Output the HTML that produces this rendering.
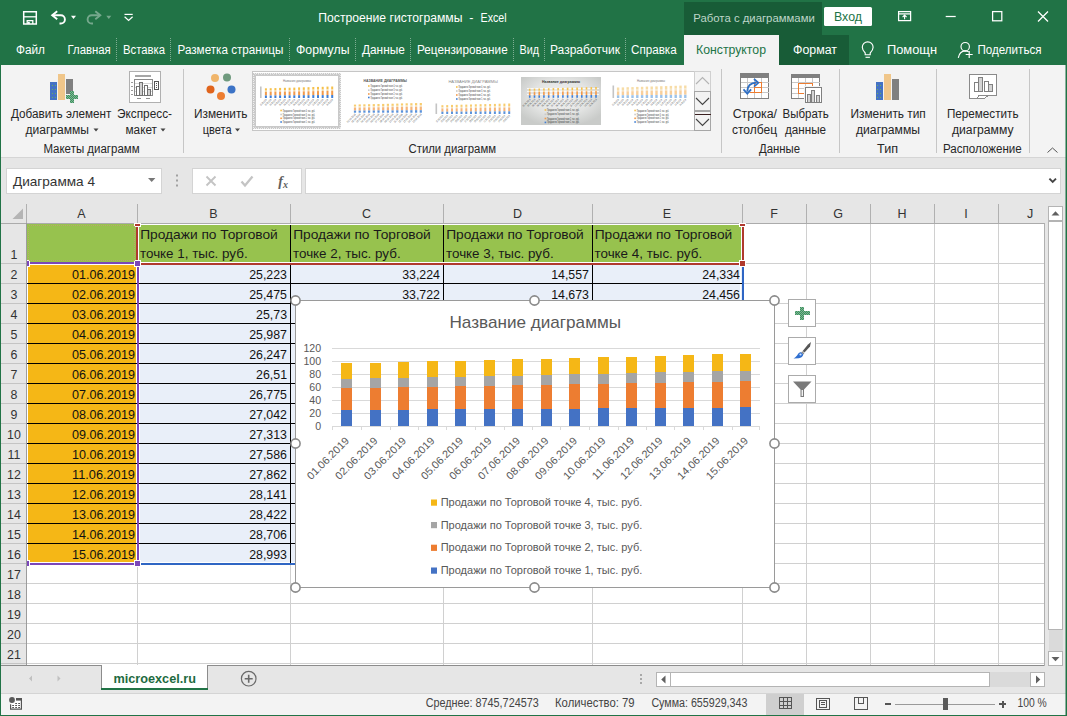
<!DOCTYPE html><html lang="ru"><head><meta charset="utf-8"><title>Построение гистограммы - Excel</title>
<style>html,body{margin:0;padding:0;background:#fff;overflow:hidden}svg{display:block;font-family:'Liberation Sans', sans-serif}</style></head><body>
<svg width="1067" height="716" viewBox="0 0 1067 716">
<g id="chrome" shape-rendering="crispEdges">
<rect x="0" y="0" width="1067" height="716" fill="#e6e6e6" />
<rect x="0" y="0" width="1067" height="65" fill="#217346" />
<rect x="684" y="2" width="138" height="33" fill="#185c37" />
<rect x="779" y="35" width="70" height="30" fill="#185c37" />
<rect x="684" y="35" width="95" height="30" fill="#f3f3f3" />
<rect x="1" y="65" width="1065" height="92" fill="#f3f3f3" />
<line x1="1" y1="157.5" x2="1066" y2="157.5" stroke="#d5d5d5" stroke-width="1" />
</g>
<g id="titlebar">
<g fill="none" stroke="#fff" stroke-width="1.500"><path d="M23.700 11.700h12.600v12.400H23.700z"/><path d="M24 16.800h12" stroke-width="1.300"/><path d="M27.200 24v-3.400h5.600V24" stroke-width="1.300"/></g><rect x="27.800" y="21.800" width="2" height="2.200" fill="#fff"/>
<g fill="none" stroke="#fff" stroke-width="1.900" stroke-linejoin="miter"><path d="M57.200 11.300l-5 4 5 4"/><path d="M52.500 15.300h8.300a4.100 4.100 0 0 1 0 8.200h-1.300"/></g>
<path d="M71 15.800h5l-2.500 3.200z" fill="#fff"/>
<g opacity=".38"><g fill="none" stroke="#fff" stroke-width="1.900"><path d="M95.300 11.300l5 4-5 4"/><path d="M100 15.300h-8.300a4.100 4.100 0 0 0 0 8.200h1.300"/></g><path d="M106.300 15.800h5l-2.500 3.200z" fill="#fff"/></g>
<path d="M124.500 14.400h8.200" stroke="#fff" stroke-width="1.200"/><path d="M124.600 16.800l4 3.700 4-3.700" fill="none" stroke="#fff" stroke-width="1.200"/>
<text x="318.3" y="22" font-size="12.5" fill="#fff" textLength="144.2" lengthAdjust="spacingAndGlyphs" >Построение гистограммы</text>
<text x="469.3" y="22" font-size="12.5" fill="#fff" >-</text>
<text x="480.6" y="22" font-size="12.5" fill="#fff" textLength="26" lengthAdjust="spacingAndGlyphs" >Excel</text>
<text x="693.3" y="22" font-size="11.6" fill="#bfd6c9" textLength="121.5" lengthAdjust="spacingAndGlyphs" >Работа с диаграммами</text>
<rect x="824" y="7" width="48" height="19" fill="#fff" rx="1.500"/>
<text x="834" y="21" font-size="12.5" fill="#217346" textLength="28" lengthAdjust="spacingAndGlyphs" >Вход</text>
<g fill="none" stroke="#fff" stroke-width="1.250"><rect x="898.600" y="11.600" width="12" height="9"/><path d="M898.600 13.900h12"/><path d="M945.700 16.500h10"/><rect x="992.600" y="11.600" width="9.200" height="9.200"/><path d="M904.600 19.300v-4m-2 1.800l2-2 2 2" stroke-width="1.100"/><path d="M1038 11.500l10 10m0-10l-10 10"/></g>
</g>
<g id="tabs">
<text x="16" y="54" font-size="12.5" fill="#fff" textLength="29" lengthAdjust="spacingAndGlyphs" >Файл</text>
<text x="67.5" y="54" font-size="12.5" fill="#fff" textLength="43.2" lengthAdjust="spacingAndGlyphs" >Главная</text>
<text x="123" y="54" font-size="12.5" fill="#fff" textLength="42" lengthAdjust="spacingAndGlyphs" >Вставка</text>
<text x="177.5" y="54" font-size="12.5" fill="#fff" textLength="105.9" lengthAdjust="spacingAndGlyphs" >Разметка страницы</text>
<text x="296" y="54" font-size="12.5" fill="#fff" textLength="53.5" lengthAdjust="spacingAndGlyphs" >Формулы</text>
<text x="362" y="54" font-size="12.5" fill="#fff" textLength="42.8" lengthAdjust="spacingAndGlyphs" >Данные</text>
<text x="417" y="54" font-size="12.5" fill="#fff" textLength="90.7" lengthAdjust="spacingAndGlyphs" >Рецензирование</text>
<text x="519.5" y="54" font-size="12.5" fill="#fff" textLength="19.5" lengthAdjust="spacingAndGlyphs" >Вид</text>
<text x="550" y="54" font-size="12.5" fill="#fff" textLength="70" lengthAdjust="spacingAndGlyphs" >Разработчик</text>
<text x="631" y="54" font-size="12.5" fill="#fff" textLength="45.7" lengthAdjust="spacingAndGlyphs" >Справка</text>
<line x1="116.5" y1="38" x2="116.5" y2="61" stroke="#7fae93" stroke-width="1" shape-rendering="crispEdges" stroke-dasharray="1 1"/>
<line x1="170.5" y1="38" x2="170.5" y2="61" stroke="#7fae93" stroke-width="1" shape-rendering="crispEdges" stroke-dasharray="1 1"/>
<line x1="289.5" y1="38" x2="289.5" y2="61" stroke="#7fae93" stroke-width="1" shape-rendering="crispEdges" stroke-dasharray="1 1"/>
<line x1="355.5" y1="38" x2="355.5" y2="61" stroke="#7fae93" stroke-width="1" shape-rendering="crispEdges" stroke-dasharray="1 1"/>
<line x1="410.5" y1="38" x2="410.5" y2="61" stroke="#7fae93" stroke-width="1" shape-rendering="crispEdges" stroke-dasharray="1 1"/>
<line x1="513.5" y1="38" x2="513.5" y2="61" stroke="#7fae93" stroke-width="1" shape-rendering="crispEdges" stroke-dasharray="1 1"/>
<line x1="544.5" y1="38" x2="544.5" y2="61" stroke="#7fae93" stroke-width="1" shape-rendering="crispEdges" stroke-dasharray="1 1"/>
<line x1="625.5" y1="38" x2="625.5" y2="61" stroke="#7fae93" stroke-width="1" shape-rendering="crispEdges" stroke-dasharray="1 1"/>
<text x="696" y="54" font-size="12.5" fill="#217346" textLength="70" lengthAdjust="spacingAndGlyphs" >Конструктор</text>
<text x="793" y="54" font-size="12.5" fill="#fff" textLength="44" lengthAdjust="spacingAndGlyphs" >Формат</text>
<g fill="none" stroke="#fff" stroke-width="1.150"><path d="M865.200 53c-1.800-1.800-2.900-3.500-2.900-5.800a5.400 5.400 0 0 1 10.800 0c0 2.300-1.100 4-2.900 5.800v1.700h-5z"/><path d="M865.500 57.300h4.400"/></g>
<text x="887" y="54" font-size="12.5" fill="#fff" textLength="50" lengthAdjust="spacingAndGlyphs" >Помощн</text>
<g fill="none" stroke="#fff" stroke-width="1.150"><circle cx="965.200" cy="46.700" r="4.200"/><path d="M958.300 57.800c.8-4.300 3.300-6.800 6.900-6.900 1.300 0 2.500.3 3.500.9"/><path d="M965.700 54.500h7m-3.500-3.500v7"/></g>
<text x="977.5" y="54" font-size="12.5" fill="#fff" textLength="64" lengthAdjust="spacingAndGlyphs" >Поделиться</text>
</g>
<g id="ribbon">
<line x1="183.5" y1="69" x2="183.5" y2="153" stroke="#c6c6c6" stroke-width="1" shape-rendering="crispEdges"/>
<line x1="721.5" y1="69" x2="721.5" y2="153" stroke="#c6c6c6" stroke-width="1" shape-rendering="crispEdges"/>
<line x1="839.5" y1="69" x2="839.5" y2="153" stroke="#c6c6c6" stroke-width="1" shape-rendering="crispEdges"/>
<line x1="936.5" y1="69" x2="936.5" y2="153" stroke="#c6c6c6" stroke-width="1" shape-rendering="crispEdges"/>
<line x1="1029.5" y1="69" x2="1029.5" y2="153" stroke="#c6c6c6" stroke-width="1" shape-rendering="crispEdges"/>
<defs><pattern id="gd" width="3" height="4" patternUnits="userSpaceOnUse"><rect width="3" height="4" fill="#4472c4"/><rect x="1" y="1" width="1" height="1" fill="#6fae5a"/></pattern><pattern id="hx" width="2" height="2" patternUnits="userSpaceOnUse"><rect width="2" height="2" fill="#3f8f5f"/><rect width="1" height="1" fill="#7db894"/><rect x="1" y="1" width="1" height="1" fill="#7db894"/></pattern></defs>
<g shape-rendering="crispEdges"><rect x="50" y="82" width="7" height="18" fill="url(#gd)"/><rect x="58" y="74" width="7" height="26" fill="#f0c68a"/><rect x="66" y="79" width="7" height="15" fill="#808080"/><path d="M69.500 90.500h5v4h4v5h-4v4h-5v-4h-4v-5h4z" fill="#f3f3f3"/><path d="M70 91h4v4h4v4h-4v4h-4v-4h-4v-4h4z" fill="url(#hx)"/></g>
<text x="11" y="117.8" font-size="12" fill="#262626" textLength="100.4" lengthAdjust="spacingAndGlyphs" >Добавить элемент</text>
<text x="25.5" y="134.2" font-size="12" fill="#262626" textLength="63.5" lengthAdjust="spacingAndGlyphs" >диаграммы</text>
<path d="M93.500 128.500l2.500 3 2.500-3z" fill="#444"/>
<g shape-rendering="crispEdges"><rect x="129.500" y="71.500" width="31" height="31" fill="#fff" stroke="#b0b0b0"/><rect x="135" y="75" width="16" height="2" fill="#a6a6a6"/><rect x="134.500" y="79.500" width="18" height="16" fill="#fff" stroke="#8a8a8a"/><path d="M135 83.500h17M135 87.500h17M135 91.500h17" stroke="#d8d8d8" fill="none"/><path d="M131 82.500h2M131 86.500h2M131 90.500h2M131 94.500h2" stroke="#9a9a9a" fill="none"/><rect x="136.500" y="86.500" width="3" height="9" fill="#fff" stroke="#707070"/><rect x="139.500" y="82.500" width="3" height="13" fill="#d0d0d0" stroke="#707070"/><rect x="144.500" y="85.500" width="3" height="10" fill="#fff" stroke="#707070"/><rect x="147.500" y="89.500" width="3" height="6" fill="#d0d0d0" stroke="#707070"/><rect x="154.500" y="81.500" width="4" height="8" fill="#fff" stroke="#555"/><rect x="156" y="83" width="1" height="1" fill="#555"/><rect x="156" y="85" width="1" height="1" fill="#555"/><rect x="156" y="87" width="1" height="1" fill="#555"/><rect x="137" y="98" width="4" height="1" fill="#909090"/><rect x="146" y="98" width="4" height="1" fill="#909090"/></g>
<text x="117" y="117.8" font-size="12" fill="#262626" textLength="55" lengthAdjust="spacingAndGlyphs" >Экспресс-</text>
<text x="125.5" y="134.2" font-size="12" fill="#262626" textLength="31.5" lengthAdjust="spacingAndGlyphs" >макет</text>
<path d="M160.500 128.500l2.500 3 2.500-3z" fill="#444"/>
<text x="43.4" y="153.2" font-size="12" fill="#262626" textLength="96.2" lengthAdjust="spacingAndGlyphs" >Макеты диаграмм</text>
<circle cx="215" cy="78" r="4" fill="#f0b56a"/>
<circle cx="227" cy="77.5" r="4" fill="#6f9a7e"/>
<circle cx="210.5" cy="89.5" r="4" fill="#e0641c"/>
<circle cx="231.5" cy="89.5" r="4" fill="#3c73c6"/>
<circle cx="221" cy="96" r="4" fill="#ed7d31"/>
<text x="194" y="117.8" font-size="12" fill="#262626" textLength="53.5" lengthAdjust="spacingAndGlyphs" >Изменить</text>
<text x="202.7" y="134.2" font-size="12" fill="#262626" textLength="28.9" lengthAdjust="spacingAndGlyphs" >цвета</text>
<path d="M235 128.500l2.500 3 2.500-3z" fill="#444"/>
<g shape-rendering="crispEdges">
<rect x="252.5" y="71.5" width="442" height="59" fill="#fff" stroke="#c6c6c6"/>
<rect x="694.5" y="71.5" width="16" height="20" fill="#f3f3f3" stroke="#d0d0d0"/>
<rect x="694.5" y="91.5" width="16" height="19" fill="#f3f3f3" stroke="#a6a6a6"/>
<rect x="694.5" y="111.5" width="16" height="19" fill="#f3f3f3" stroke="#a6a6a6"/>
</g>
<g fill="none" stroke="#444" stroke-width="1.100"><path d="M696 84l6.500-6.500 6.500 6.500" stroke="#b4b4b4"/><path d="M696 98l6.500 6.500 6.500-6.500"/><path d="M696 119l6.500 6.500 6.500-6.500"/><path d="M695 114.500h15.500" shape-rendering="crispEdges" stroke="#3a2020"/></g>
<rect x="253" y="73" width="88" height="56" fill="#c9c9c9" shape-rendering="crispEdges"/>
<rect x="253.500" y="73.500" width="87" height="55" fill="none" stroke="#efefef" stroke-dasharray="1 1" shape-rendering="crispEdges"/>
<rect x="254.500" y="74.500" width="85" height="53" fill="none" stroke="#dcdcdc" stroke-dasharray="1 2" shape-rendering="crispEdges"/>
<rect x="256" y="76" width="82" height="50" fill="#fff" shape-rendering="crispEdges"/>
<rect x="264.9" y="88.3" width="2" height="2.3" fill="#f6c04a" />
<rect x="264.9" y="90.7" width="2" height="1.4" fill="#f3d9a8" />
<rect x="264.9" y="92.0" width="2" height="3.5" fill="#f29a4a" />
<rect x="264.9" y="95.5" width="2" height="2.5" fill="#3f7fd6" />
<text transform="translate(266.9,100) rotate(-45)" font-size="2.600" fill="#444" text-anchor="end" textLength="8.5" lengthAdjust="spacingAndGlyphs">01.06.2019</text>
<rect x="269.7" y="88.2" width="2" height="2.3" fill="#f6c04a" />
<rect x="269.7" y="90.6" width="2" height="1.4" fill="#f3d9a8" />
<rect x="269.7" y="91.9" width="2" height="3.5" fill="#f29a4a" />
<rect x="269.7" y="95.5" width="2" height="2.5" fill="#3f7fd6" />
<text transform="translate(271.7,100) rotate(-45)" font-size="2.600" fill="#444" text-anchor="end" textLength="8.5" lengthAdjust="spacingAndGlyphs">02.06.2019</text>
<rect x="274.4" y="88.1" width="2" height="2.4" fill="#f6c04a" />
<rect x="274.4" y="90.5" width="2" height="1.4" fill="#f3d9a8" />
<rect x="274.4" y="91.8" width="2" height="3.6" fill="#f29a4a" />
<rect x="274.4" y="95.4" width="2" height="2.6" fill="#3f7fd6" />
<text transform="translate(276.4,100) rotate(-45)" font-size="2.600" fill="#444" text-anchor="end" textLength="8.5" lengthAdjust="spacingAndGlyphs">03.06.2019</text>
<rect x="279.1" y="87.9" width="2" height="2.4" fill="#f6c04a" />
<rect x="279.1" y="90.4" width="2" height="1.4" fill="#f3d9a8" />
<rect x="279.1" y="91.8" width="2" height="3.6" fill="#f29a4a" />
<rect x="279.1" y="95.4" width="2" height="2.6" fill="#3f7fd6" />
<text transform="translate(281.1,100) rotate(-45)" font-size="2.600" fill="#444" text-anchor="end" textLength="8.5" lengthAdjust="spacingAndGlyphs">04.06.2019</text>
<rect x="283.9" y="87.8" width="2" height="2.4" fill="#f6c04a" />
<rect x="283.9" y="90.3" width="2" height="1.4" fill="#f3d9a8" />
<rect x="283.9" y="91.7" width="2" height="3.7" fill="#f29a4a" />
<rect x="283.9" y="95.4" width="2" height="2.6" fill="#3f7fd6" />
<text transform="translate(285.9,100) rotate(-45)" font-size="2.600" fill="#444" text-anchor="end" textLength="8.5" lengthAdjust="spacingAndGlyphs">05.06.2019</text>
<rect x="288.6" y="87.7" width="2" height="2.5" fill="#f6c04a" />
<rect x="288.6" y="90.2" width="2" height="1.4" fill="#f3d9a8" />
<rect x="288.6" y="91.6" width="2" height="3.7" fill="#f29a4a" />
<rect x="288.6" y="95.3" width="2" height="2.7" fill="#3f7fd6" />
<text transform="translate(290.6,100) rotate(-45)" font-size="2.600" fill="#444" text-anchor="end" textLength="8.5" lengthAdjust="spacingAndGlyphs">06.06.2019</text>
<rect x="293.3" y="87.6" width="2" height="2.5" fill="#f6c04a" />
<rect x="293.3" y="90.1" width="2" height="1.5" fill="#f3d9a8" />
<rect x="293.3" y="91.5" width="2" height="3.8" fill="#f29a4a" />
<rect x="293.3" y="95.3" width="2" height="2.7" fill="#3f7fd6" />
<text transform="translate(295.3,100) rotate(-45)" font-size="2.600" fill="#444" text-anchor="end" textLength="8.5" lengthAdjust="spacingAndGlyphs">07.06.2019</text>
<rect x="298.1" y="87.4" width="2" height="2.5" fill="#f6c04a" />
<rect x="298.1" y="90.0" width="2" height="1.5" fill="#f3d9a8" />
<rect x="298.1" y="91.4" width="2" height="3.8" fill="#f29a4a" />
<rect x="298.1" y="95.2" width="2" height="2.8" fill="#3f7fd6" />
<text transform="translate(300.1,100) rotate(-45)" font-size="2.600" fill="#444" text-anchor="end" textLength="8.5" lengthAdjust="spacingAndGlyphs">08.06.2019</text>
<rect x="302.8" y="87.3" width="2" height="2.6" fill="#f6c04a" />
<rect x="302.8" y="89.9" width="2" height="1.5" fill="#f3d9a8" />
<rect x="302.8" y="91.4" width="2" height="3.9" fill="#f29a4a" />
<rect x="302.8" y="95.2" width="2" height="2.8" fill="#3f7fd6" />
<text transform="translate(304.8,100) rotate(-45)" font-size="2.600" fill="#444" text-anchor="end" textLength="8.5" lengthAdjust="spacingAndGlyphs">09.06.2019</text>
<rect x="307.5" y="87.2" width="2" height="2.6" fill="#f6c04a" />
<rect x="307.5" y="89.8" width="2" height="1.5" fill="#f3d9a8" />
<rect x="307.5" y="91.3" width="2" height="3.9" fill="#f29a4a" />
<rect x="307.5" y="95.2" width="2" height="2.8" fill="#3f7fd6" />
<text transform="translate(309.5,100) rotate(-45)" font-size="2.600" fill="#444" text-anchor="end" textLength="8.5" lengthAdjust="spacingAndGlyphs">10.06.2019</text>
<rect x="312.3" y="87.0" width="2" height="2.6" fill="#f6c04a" />
<rect x="312.3" y="89.7" width="2" height="1.5" fill="#f3d9a8" />
<rect x="312.3" y="91.2" width="2" height="4.0" fill="#f29a4a" />
<rect x="312.3" y="95.1" width="2" height="2.9" fill="#3f7fd6" />
<text transform="translate(314.3,100) rotate(-45)" font-size="2.600" fill="#444" text-anchor="end" textLength="8.5" lengthAdjust="spacingAndGlyphs">11.06.2019</text>
<rect x="317.0" y="86.9" width="2" height="2.7" fill="#f6c04a" />
<rect x="317.0" y="89.6" width="2" height="1.6" fill="#f3d9a8" />
<rect x="317.0" y="91.1" width="2" height="4.0" fill="#f29a4a" />
<rect x="317.0" y="95.1" width="2" height="2.9" fill="#3f7fd6" />
<text transform="translate(319.0,100) rotate(-45)" font-size="2.600" fill="#444" text-anchor="end" textLength="8.5" lengthAdjust="spacingAndGlyphs">12.06.2019</text>
<rect x="321.7" y="86.8" width="2" height="2.7" fill="#f6c04a" />
<rect x="321.7" y="89.5" width="2" height="1.6" fill="#f3d9a8" />
<rect x="321.7" y="91.0" width="2" height="4.0" fill="#f29a4a" />
<rect x="321.7" y="95.1" width="2" height="2.9" fill="#3f7fd6" />
<text transform="translate(323.7,100) rotate(-45)" font-size="2.600" fill="#444" text-anchor="end" textLength="8.5" lengthAdjust="spacingAndGlyphs">13.06.2019</text>
<rect x="326.5" y="86.6" width="2" height="2.7" fill="#f6c04a" />
<rect x="326.5" y="89.4" width="2" height="1.6" fill="#f3d9a8" />
<rect x="326.5" y="91.0" width="2" height="4.1" fill="#f29a4a" />
<rect x="326.5" y="95.0" width="2" height="3.0" fill="#3f7fd6" />
<text transform="translate(328.5,100) rotate(-45)" font-size="2.600" fill="#444" text-anchor="end" textLength="8.5" lengthAdjust="spacingAndGlyphs">14.06.2019</text>
<rect x="331.2" y="86.5" width="2" height="2.8" fill="#f6c04a" />
<rect x="331.2" y="89.3" width="2" height="1.6" fill="#f3d9a8" />
<rect x="331.2" y="90.9" width="2" height="4.1" fill="#f29a4a" />
<rect x="331.2" y="95.0" width="2" height="3.0" fill="#3f7fd6" />
<text transform="translate(333.2,100) rotate(-45)" font-size="2.600" fill="#444" text-anchor="end" textLength="8.5" lengthAdjust="spacingAndGlyphs">15.06.2019</text>
<rect x="260" y="86.5" width="1.6" height="11.5" fill="#c4c4c4" />
<text x="283" y="82.3" font-size="3.2" fill="#777" textLength="28" lengthAdjust="spacingAndGlyphs">Название диаграммы</text>
<rect x="280.3" y="109.7" width="1.6" height="1.6" fill="#f6c04a" />
<text x="282.8" y="111.5" font-size="2.800" fill="#333" textLength="32.2" lengthAdjust="spacingAndGlyphs">Продажи по Торговой точке 4, тыс. руб.</text>
<rect x="280.3" y="113.7" width="1.6" height="1.6" fill="#c9c9c9" />
<text x="282.8" y="115.5" font-size="2.800" fill="#333" textLength="32.2" lengthAdjust="spacingAndGlyphs">Продажи по Торговой точке 3, тыс. руб.</text>
<rect x="280.3" y="117.5" width="1.6" height="1.6" fill="#f29a4a" />
<text x="282.8" y="119.3" font-size="2.800" fill="#333" textLength="32.2" lengthAdjust="spacingAndGlyphs">Продажи по Торговой точке 2, тыс. руб.</text>
<rect x="280.3" y="121.2" width="1.6" height="1.6" fill="#3f7fd6" />
<text x="282.8" y="123" font-size="2.800" fill="#333" textLength="32.2" lengthAdjust="spacingAndGlyphs">Продажи по Торговой точке 1, тыс. руб.</text>
<rect x="353.9" y="104.6" width="2.2" height="2.0" fill="#f8cd6e" />
<rect x="353.9" y="106.5" width="2.2" height="1.1" fill="#f6e3bd" />
<rect x="353.9" y="107.6" width="2.2" height="2.9" fill="#f6b47a" />
<rect x="353.9" y="110.6" width="2.2" height="2.1" fill="#5b93dc" />
<text transform="translate(356.0,114.7) rotate(-45)" font-size="2.600" fill="#444" text-anchor="end" textLength="11.7" lengthAdjust="spacingAndGlyphs">01.06.2019</text>
<rect x="358.6" y="104.4" width="2.2" height="2.0" fill="#f8cd6e" />
<rect x="358.6" y="106.4" width="2.2" height="1.2" fill="#f6e3bd" />
<rect x="358.6" y="107.6" width="2.2" height="3.0" fill="#f6b47a" />
<rect x="358.6" y="110.6" width="2.2" height="2.1" fill="#5b93dc" />
<text transform="translate(360.7,114.7) rotate(-45)" font-size="2.600" fill="#444" text-anchor="end" textLength="11.7" lengthAdjust="spacingAndGlyphs">02.06.2019</text>
<rect x="363.3" y="104.3" width="2.2" height="2.0" fill="#f8cd6e" />
<rect x="363.3" y="106.3" width="2.2" height="1.2" fill="#f6e3bd" />
<rect x="363.3" y="107.5" width="2.2" height="3.0" fill="#f6b47a" />
<rect x="363.3" y="110.5" width="2.2" height="2.2" fill="#5b93dc" />
<text transform="translate(365.4,114.7) rotate(-45)" font-size="2.600" fill="#444" text-anchor="end" textLength="11.7" lengthAdjust="spacingAndGlyphs">03.06.2019</text>
<rect x="368.0" y="104.2" width="2.2" height="2.0" fill="#f8cd6e" />
<rect x="368.0" y="106.3" width="2.2" height="1.2" fill="#f6e3bd" />
<rect x="368.0" y="107.4" width="2.2" height="3.1" fill="#f6b47a" />
<rect x="368.0" y="110.5" width="2.2" height="2.2" fill="#5b93dc" />
<text transform="translate(370.1,114.7) rotate(-45)" font-size="2.600" fill="#444" text-anchor="end" textLength="11.7" lengthAdjust="spacingAndGlyphs">04.06.2019</text>
<rect x="372.7" y="104.1" width="2.2" height="2.1" fill="#f8cd6e" />
<rect x="372.7" y="106.2" width="2.2" height="1.2" fill="#f6e3bd" />
<rect x="372.7" y="107.4" width="2.2" height="3.1" fill="#f6b47a" />
<rect x="372.7" y="110.5" width="2.2" height="2.2" fill="#5b93dc" />
<text transform="translate(374.8,114.7) rotate(-45)" font-size="2.600" fill="#444" text-anchor="end" textLength="11.7" lengthAdjust="spacingAndGlyphs">05.06.2019</text>
<rect x="377.4" y="104.0" width="2.2" height="2.1" fill="#f8cd6e" />
<rect x="377.4" y="106.1" width="2.2" height="1.2" fill="#f6e3bd" />
<rect x="377.4" y="107.3" width="2.2" height="3.1" fill="#f6b47a" />
<rect x="377.4" y="110.4" width="2.2" height="2.3" fill="#5b93dc" />
<text transform="translate(379.5,114.7) rotate(-45)" font-size="2.600" fill="#444" text-anchor="end" textLength="11.7" lengthAdjust="spacingAndGlyphs">06.06.2019</text>
<rect x="382.1" y="103.9" width="2.2" height="2.1" fill="#f8cd6e" />
<rect x="382.1" y="106.0" width="2.2" height="1.2" fill="#f6e3bd" />
<rect x="382.1" y="107.2" width="2.2" height="3.2" fill="#f6b47a" />
<rect x="382.1" y="110.4" width="2.2" height="2.3" fill="#5b93dc" />
<text transform="translate(384.2,114.7) rotate(-45)" font-size="2.600" fill="#444" text-anchor="end" textLength="11.7" lengthAdjust="spacingAndGlyphs">07.06.2019</text>
<rect x="386.8" y="103.8" width="2.2" height="2.1" fill="#f8cd6e" />
<rect x="386.8" y="105.9" width="2.2" height="1.2" fill="#f6e3bd" />
<rect x="386.8" y="107.2" width="2.2" height="3.2" fill="#f6b47a" />
<rect x="386.8" y="110.4" width="2.2" height="2.3" fill="#5b93dc" />
<text transform="translate(388.9,114.7) rotate(-45)" font-size="2.600" fill="#444" text-anchor="end" textLength="11.7" lengthAdjust="spacingAndGlyphs">08.06.2019</text>
<rect x="391.5" y="103.7" width="2.2" height="2.2" fill="#f8cd6e" />
<rect x="391.5" y="105.8" width="2.2" height="1.3" fill="#f6e3bd" />
<rect x="391.5" y="107.1" width="2.2" height="3.3" fill="#f6b47a" />
<rect x="391.5" y="110.4" width="2.2" height="2.3" fill="#5b93dc" />
<text transform="translate(393.6,114.7) rotate(-45)" font-size="2.600" fill="#444" text-anchor="end" textLength="11.7" lengthAdjust="spacingAndGlyphs">09.06.2019</text>
<rect x="396.2" y="103.6" width="2.2" height="2.2" fill="#f8cd6e" />
<rect x="396.2" y="105.7" width="2.2" height="1.3" fill="#f6e3bd" />
<rect x="396.2" y="107.0" width="2.2" height="3.3" fill="#f6b47a" />
<rect x="396.2" y="110.3" width="2.2" height="2.4" fill="#5b93dc" />
<text transform="translate(398.3,114.7) rotate(-45)" font-size="2.600" fill="#444" text-anchor="end" textLength="11.7" lengthAdjust="spacingAndGlyphs">10.06.2019</text>
<rect x="400.9" y="103.4" width="2.2" height="2.2" fill="#f8cd6e" />
<rect x="400.9" y="105.7" width="2.2" height="1.3" fill="#f6e3bd" />
<rect x="400.9" y="107.0" width="2.2" height="3.3" fill="#f6b47a" />
<rect x="400.9" y="110.3" width="2.2" height="2.4" fill="#5b93dc" />
<text transform="translate(403.0,114.7) rotate(-45)" font-size="2.600" fill="#444" text-anchor="end" textLength="11.7" lengthAdjust="spacingAndGlyphs">11.06.2019</text>
<rect x="405.6" y="103.3" width="2.2" height="2.2" fill="#f8cd6e" />
<rect x="405.6" y="105.6" width="2.2" height="1.3" fill="#f6e3bd" />
<rect x="405.6" y="106.9" width="2.2" height="3.4" fill="#f6b47a" />
<rect x="405.6" y="110.3" width="2.2" height="2.4" fill="#5b93dc" />
<text transform="translate(407.7,114.7) rotate(-45)" font-size="2.600" fill="#444" text-anchor="end" textLength="11.7" lengthAdjust="spacingAndGlyphs">12.06.2019</text>
<rect x="410.3" y="103.2" width="2.2" height="2.3" fill="#f8cd6e" />
<rect x="410.3" y="105.5" width="2.2" height="1.3" fill="#f6e3bd" />
<rect x="410.3" y="106.8" width="2.2" height="3.4" fill="#f6b47a" />
<rect x="410.3" y="110.2" width="2.2" height="2.5" fill="#5b93dc" />
<text transform="translate(412.4,114.7) rotate(-45)" font-size="2.600" fill="#444" text-anchor="end" textLength="11.7" lengthAdjust="spacingAndGlyphs">13.06.2019</text>
<rect x="415.0" y="103.1" width="2.2" height="2.3" fill="#f8cd6e" />
<rect x="415.0" y="105.4" width="2.2" height="1.3" fill="#f6e3bd" />
<rect x="415.0" y="106.8" width="2.2" height="3.5" fill="#f6b47a" />
<rect x="415.0" y="110.2" width="2.2" height="2.5" fill="#5b93dc" />
<text transform="translate(417.1,114.7) rotate(-45)" font-size="2.600" fill="#444" text-anchor="end" textLength="11.7" lengthAdjust="spacingAndGlyphs">14.06.2019</text>
<rect x="419.7" y="103.0" width="2.2" height="2.3" fill="#f8cd6e" />
<rect x="419.7" y="105.3" width="2.2" height="1.4" fill="#f6e3bd" />
<rect x="419.7" y="106.7" width="2.2" height="3.5" fill="#f6b47a" />
<rect x="419.7" y="110.2" width="2.2" height="2.5" fill="#5b93dc" />
<text transform="translate(421.8,114.7) rotate(-45)" font-size="2.600" fill="#444" text-anchor="end" textLength="11.7" lengthAdjust="spacingAndGlyphs">15.06.2019</text>
<text x="363.6" y="81.8" font-size="3.6" fill="#555" textLength="43.4" lengthAdjust="spacingAndGlyphs" font-weight="bold">НАЗВАНИЕ ДИАГРАММЫ</text>
<rect x="368" y="85.2" width="1.6" height="1.6" fill="#f6c04a" />
<text x="370.5" y="87" font-size="2.800" fill="#333" textLength="32.1" lengthAdjust="spacingAndGlyphs">Продажи по Торговой точке 4, тыс. руб.</text>
<rect x="368" y="89.4" width="1.6" height="1.6" fill="#c9c9c9" />
<text x="370.5" y="91.2" font-size="2.800" fill="#333" textLength="32.1" lengthAdjust="spacingAndGlyphs">Продажи по Торговой точке 3, тыс. руб.</text>
<rect x="368" y="93.2" width="1.6" height="1.6" fill="#f29a4a" />
<text x="370.5" y="95" font-size="2.800" fill="#333" textLength="32.1" lengthAdjust="spacingAndGlyphs">Продажи по Торговой точке 2, тыс. руб.</text>
<rect x="368" y="96.7" width="1.6" height="1.6" fill="#3f7fd6" />
<text x="370.5" y="98.5" font-size="2.800" fill="#333" textLength="32.1" lengthAdjust="spacingAndGlyphs">Продажи по Торговой точке 1, тыс. руб.</text>
<rect x="441.4" y="105.2" width="2" height="2.1" fill="#f8cd6e" />
<rect x="441.4" y="107.3" width="2" height="1.2" fill="#f6e3bd" />
<rect x="441.4" y="108.5" width="2" height="3.2" fill="#f6b47a" />
<rect x="441.4" y="111.7" width="2" height="2.3" fill="#5b93dc" />
<text transform="translate(443.4,116) rotate(-45)" font-size="2.600" fill="#444" text-anchor="end" textLength="9.2" lengthAdjust="spacingAndGlyphs">01.06.2019</text>
<rect x="446.2" y="105.1" width="2" height="2.1" fill="#f8cd6e" />
<rect x="446.2" y="107.2" width="2" height="1.3" fill="#f6e3bd" />
<rect x="446.2" y="108.5" width="2" height="3.2" fill="#f6b47a" />
<rect x="446.2" y="111.7" width="2" height="2.3" fill="#5b93dc" />
<text transform="translate(448.2,116) rotate(-45)" font-size="2.600" fill="#444" text-anchor="end" textLength="9.2" lengthAdjust="spacingAndGlyphs">02.06.2019</text>
<rect x="451.0" y="104.9" width="2" height="2.2" fill="#f8cd6e" />
<rect x="451.0" y="107.1" width="2" height="1.3" fill="#f6e3bd" />
<rect x="451.0" y="108.4" width="2" height="3.3" fill="#f6b47a" />
<rect x="451.0" y="111.6" width="2" height="2.4" fill="#5b93dc" />
<text transform="translate(453.0,116) rotate(-45)" font-size="2.600" fill="#444" text-anchor="end" textLength="9.2" lengthAdjust="spacingAndGlyphs">03.06.2019</text>
<rect x="455.7" y="104.8" width="2" height="2.2" fill="#f8cd6e" />
<rect x="455.7" y="107.0" width="2" height="1.3" fill="#f6e3bd" />
<rect x="455.7" y="108.3" width="2" height="3.3" fill="#f6b47a" />
<rect x="455.7" y="111.6" width="2" height="2.4" fill="#5b93dc" />
<text transform="translate(457.7,116) rotate(-45)" font-size="2.600" fill="#444" text-anchor="end" textLength="9.2" lengthAdjust="spacingAndGlyphs">04.06.2019</text>
<rect x="460.5" y="104.7" width="2" height="2.2" fill="#f8cd6e" />
<rect x="460.5" y="106.9" width="2" height="1.3" fill="#f6e3bd" />
<rect x="460.5" y="108.2" width="2" height="3.3" fill="#f6b47a" />
<rect x="460.5" y="111.6" width="2" height="2.4" fill="#5b93dc" />
<text transform="translate(462.5,116) rotate(-45)" font-size="2.600" fill="#444" text-anchor="end" textLength="9.2" lengthAdjust="spacingAndGlyphs">05.06.2019</text>
<rect x="465.3" y="104.6" width="2" height="2.3" fill="#f8cd6e" />
<rect x="465.3" y="106.8" width="2" height="1.3" fill="#f6e3bd" />
<rect x="465.3" y="108.2" width="2" height="3.4" fill="#f6b47a" />
<rect x="465.3" y="111.6" width="2" height="2.4" fill="#5b93dc" />
<text transform="translate(467.3,116) rotate(-45)" font-size="2.600" fill="#444" text-anchor="end" textLength="9.2" lengthAdjust="spacingAndGlyphs">06.06.2019</text>
<rect x="470.0" y="104.5" width="2" height="2.3" fill="#f8cd6e" />
<rect x="470.0" y="106.7" width="2" height="1.3" fill="#f6e3bd" />
<rect x="470.0" y="108.1" width="2" height="3.4" fill="#f6b47a" />
<rect x="470.0" y="111.5" width="2" height="2.5" fill="#5b93dc" />
<text transform="translate(472.0,116) rotate(-45)" font-size="2.600" fill="#444" text-anchor="end" textLength="9.2" lengthAdjust="spacingAndGlyphs">07.06.2019</text>
<rect x="474.8" y="104.3" width="2" height="2.3" fill="#f8cd6e" />
<rect x="474.8" y="106.7" width="2" height="1.4" fill="#f6e3bd" />
<rect x="474.8" y="108.0" width="2" height="3.5" fill="#f6b47a" />
<rect x="474.8" y="111.5" width="2" height="2.5" fill="#5b93dc" />
<text transform="translate(476.8,116) rotate(-45)" font-size="2.600" fill="#444" text-anchor="end" textLength="9.2" lengthAdjust="spacingAndGlyphs">08.06.2019</text>
<rect x="479.6" y="104.2" width="2" height="2.3" fill="#f8cd6e" />
<rect x="479.6" y="106.6" width="2" height="1.4" fill="#f6e3bd" />
<rect x="479.6" y="107.9" width="2" height="3.5" fill="#f6b47a" />
<rect x="479.6" y="111.5" width="2" height="2.5" fill="#5b93dc" />
<text transform="translate(481.6,116) rotate(-45)" font-size="2.600" fill="#444" text-anchor="end" textLength="9.2" lengthAdjust="spacingAndGlyphs">09.06.2019</text>
<rect x="484.3" y="104.1" width="2" height="2.4" fill="#f8cd6e" />
<rect x="484.3" y="106.5" width="2" height="1.4" fill="#f6e3bd" />
<rect x="484.3" y="107.9" width="2" height="3.6" fill="#f6b47a" />
<rect x="484.3" y="111.4" width="2" height="2.6" fill="#5b93dc" />
<text transform="translate(486.3,116) rotate(-45)" font-size="2.600" fill="#444" text-anchor="end" textLength="9.2" lengthAdjust="spacingAndGlyphs">10.06.2019</text>
<rect x="489.1" y="104.0" width="2" height="2.4" fill="#f8cd6e" />
<rect x="489.1" y="106.4" width="2" height="1.4" fill="#f6e3bd" />
<rect x="489.1" y="107.8" width="2" height="3.6" fill="#f6b47a" />
<rect x="489.1" y="111.4" width="2" height="2.6" fill="#5b93dc" />
<text transform="translate(491.1,116) rotate(-45)" font-size="2.600" fill="#444" text-anchor="end" textLength="9.2" lengthAdjust="spacingAndGlyphs">11.06.2019</text>
<rect x="493.9" y="103.9" width="2" height="2.4" fill="#f8cd6e" />
<rect x="493.9" y="106.3" width="2" height="1.4" fill="#f6e3bd" />
<rect x="493.9" y="107.7" width="2" height="3.7" fill="#f6b47a" />
<rect x="493.9" y="111.4" width="2" height="2.6" fill="#5b93dc" />
<text transform="translate(495.9,116) rotate(-45)" font-size="2.600" fill="#444" text-anchor="end" textLength="9.2" lengthAdjust="spacingAndGlyphs">12.06.2019</text>
<rect x="498.6" y="103.7" width="2" height="2.5" fill="#f8cd6e" />
<rect x="498.6" y="106.2" width="2" height="1.4" fill="#f6e3bd" />
<rect x="498.6" y="107.6" width="2" height="3.7" fill="#f6b47a" />
<rect x="498.6" y="111.3" width="2" height="2.7" fill="#5b93dc" />
<text transform="translate(500.6,116) rotate(-45)" font-size="2.600" fill="#444" text-anchor="end" textLength="9.2" lengthAdjust="spacingAndGlyphs">13.06.2019</text>
<rect x="503.4" y="103.6" width="2" height="2.5" fill="#f8cd6e" />
<rect x="503.4" y="106.1" width="2" height="1.5" fill="#f6e3bd" />
<rect x="503.4" y="107.6" width="2" height="3.7" fill="#f6b47a" />
<rect x="503.4" y="111.3" width="2" height="2.7" fill="#5b93dc" />
<text transform="translate(505.4,116) rotate(-45)" font-size="2.600" fill="#444" text-anchor="end" textLength="9.2" lengthAdjust="spacingAndGlyphs">14.06.2019</text>
<rect x="508.2" y="103.5" width="2" height="2.5" fill="#f8cd6e" />
<rect x="508.2" y="106.0" width="2" height="1.5" fill="#f6e3bd" />
<rect x="508.2" y="107.5" width="2" height="3.8" fill="#f6b47a" />
<rect x="508.2" y="111.3" width="2" height="2.7" fill="#5b93dc" />
<text transform="translate(510.2,116) rotate(-45)" font-size="2.600" fill="#444" text-anchor="end" textLength="9.2" lengthAdjust="spacingAndGlyphs">15.06.2019</text>
<rect x="435.5" y="103.5" width="1.6" height="10.5" fill="#c4c4c4" />
<text x="448.4" y="82.6" font-size="3.6" fill="#8a8a8a" textLength="49.4" lengthAdjust="spacingAndGlyphs">НАЗВАНИЕ ДИАГРАММЫ</text>
<rect x="456" y="86.2" width="1.6" height="1.6" fill="#f6c04a" />
<text x="458.5" y="88" font-size="2.800" fill="#333" textLength="32.0" lengthAdjust="spacingAndGlyphs">Продажи по Торговой точке 4, тыс. руб.</text>
<rect x="456" y="90.2" width="1.6" height="1.6" fill="#c9c9c9" />
<text x="458.5" y="92" font-size="2.800" fill="#333" textLength="32.0" lengthAdjust="spacingAndGlyphs">Продажи по Торговой точке 3, тыс. руб.</text>
<rect x="456" y="94.2" width="1.6" height="1.6" fill="#f29a4a" />
<text x="458.5" y="96" font-size="2.800" fill="#333" textLength="32.0" lengthAdjust="spacingAndGlyphs">Продажи по Торговой точке 2, тыс. руб.</text>
<rect x="456" y="98.2" width="1.6" height="1.6" fill="#3f7fd6" />
<text x="458.5" y="100" font-size="2.800" fill="#333" textLength="32.0" lengthAdjust="spacingAndGlyphs">Продажи по Торговой точке 1, тыс. руб.</text>
<rect x="521" y="77" width="80" height="48" fill="#c9cbc9" />
<defs><radialGradient id="rg" cx=".5" cy=".42" r=".62"><stop offset="0" stop-color="#f4f4f4"/><stop offset=".6" stop-color="#e2e3e2"/><stop offset="1" stop-color="#c9cbc9"/></radialGradient></defs>
<rect x="521" y="77" width="80" height="48" fill="url(#rg)" />
<line x1="527" y1="88.5" x2="599" y2="88.5" stroke="#fff" stroke-width="0.8" />
<line x1="527" y1="91.5" x2="599" y2="91.5" stroke="#fff" stroke-width="0.8" />
<line x1="527" y1="94.5" x2="599" y2="94.5" stroke="#fff" stroke-width="0.8" />
<rect x="528.9" y="88.7" width="1.6" height="2.2" fill="#f6c04a" />
<rect x="528.9" y="90.9" width="1.6" height="1.3" fill="#f3d9a8" />
<rect x="528.9" y="92.2" width="1.6" height="3.3" fill="#f29a4a" />
<rect x="528.9" y="95.4" width="1.6" height="2.4" fill="#3f7fd6" />
<text transform="translate(530.7,99.8) rotate(-45)" font-size="2.600" fill="#444" text-anchor="end" textLength="10.2" lengthAdjust="spacingAndGlyphs">01.06.2019</text>
<rect x="533.7" y="88.6" width="1.6" height="2.2" fill="#f6c04a" />
<rect x="533.7" y="90.8" width="1.6" height="1.3" fill="#f3d9a8" />
<rect x="533.7" y="92.1" width="1.6" height="3.3" fill="#f29a4a" />
<rect x="533.7" y="95.4" width="1.6" height="2.4" fill="#3f7fd6" />
<text transform="translate(535.5,99.8) rotate(-45)" font-size="2.600" fill="#444" text-anchor="end" textLength="10.2" lengthAdjust="spacingAndGlyphs">02.06.2019</text>
<rect x="538.4" y="88.5" width="1.6" height="2.2" fill="#f6c04a" />
<rect x="538.4" y="90.7" width="1.6" height="1.3" fill="#f3d9a8" />
<rect x="538.4" y="92.0" width="1.6" height="3.4" fill="#f29a4a" />
<rect x="538.4" y="95.4" width="1.6" height="2.4" fill="#3f7fd6" />
<text transform="translate(540.2,99.8) rotate(-45)" font-size="2.600" fill="#444" text-anchor="end" textLength="10.2" lengthAdjust="spacingAndGlyphs">03.06.2019</text>
<rect x="543.1" y="88.4" width="1.6" height="2.3" fill="#f6c04a" />
<rect x="543.1" y="90.6" width="1.6" height="1.3" fill="#f3d9a8" />
<rect x="543.1" y="91.9" width="1.6" height="3.4" fill="#f29a4a" />
<rect x="543.1" y="95.3" width="1.6" height="2.5" fill="#3f7fd6" />
<text transform="translate(544.9,99.8) rotate(-45)" font-size="2.600" fill="#444" text-anchor="end" textLength="10.2" lengthAdjust="spacingAndGlyphs">04.06.2019</text>
<rect x="547.9" y="88.2" width="1.6" height="2.3" fill="#f6c04a" />
<rect x="547.9" y="90.5" width="1.6" height="1.3" fill="#f3d9a8" />
<rect x="547.9" y="91.9" width="1.6" height="3.4" fill="#f29a4a" />
<rect x="547.9" y="95.3" width="1.6" height="2.5" fill="#3f7fd6" />
<text transform="translate(549.7,99.8) rotate(-45)" font-size="2.600" fill="#444" text-anchor="end" textLength="10.2" lengthAdjust="spacingAndGlyphs">05.06.2019</text>
<rect x="552.6" y="88.1" width="1.6" height="2.3" fill="#f6c04a" />
<rect x="552.6" y="90.4" width="1.6" height="1.4" fill="#f3d9a8" />
<rect x="552.6" y="91.8" width="1.6" height="3.5" fill="#f29a4a" />
<rect x="552.6" y="95.3" width="1.6" height="2.5" fill="#3f7fd6" />
<text transform="translate(554.4,99.8) rotate(-45)" font-size="2.600" fill="#444" text-anchor="end" textLength="10.2" lengthAdjust="spacingAndGlyphs">06.06.2019</text>
<rect x="557.3" y="88.0" width="1.6" height="2.4" fill="#f6c04a" />
<rect x="557.3" y="90.3" width="1.6" height="1.4" fill="#f3d9a8" />
<rect x="557.3" y="91.7" width="1.6" height="3.5" fill="#f29a4a" />
<rect x="557.3" y="95.2" width="1.6" height="2.6" fill="#3f7fd6" />
<text transform="translate(559.1,99.8) rotate(-45)" font-size="2.600" fill="#444" text-anchor="end" textLength="10.2" lengthAdjust="spacingAndGlyphs">07.06.2019</text>
<rect x="562.1" y="87.9" width="1.6" height="2.4" fill="#f6c04a" />
<rect x="562.1" y="90.2" width="1.6" height="1.4" fill="#f3d9a8" />
<rect x="562.1" y="91.6" width="1.6" height="3.6" fill="#f29a4a" />
<rect x="562.1" y="95.2" width="1.6" height="2.6" fill="#3f7fd6" />
<text transform="translate(563.9,99.8) rotate(-45)" font-size="2.600" fill="#444" text-anchor="end" textLength="10.2" lengthAdjust="spacingAndGlyphs">08.06.2019</text>
<rect x="566.8" y="87.7" width="1.6" height="2.4" fill="#f6c04a" />
<rect x="566.8" y="90.2" width="1.6" height="1.4" fill="#f3d9a8" />
<rect x="566.8" y="91.6" width="1.6" height="3.6" fill="#f29a4a" />
<rect x="566.8" y="95.2" width="1.6" height="2.6" fill="#3f7fd6" />
<text transform="translate(568.6,99.8) rotate(-45)" font-size="2.600" fill="#444" text-anchor="end" textLength="10.2" lengthAdjust="spacingAndGlyphs">09.06.2019</text>
<rect x="571.5" y="87.6" width="1.6" height="2.4" fill="#f6c04a" />
<rect x="571.5" y="90.1" width="1.6" height="1.4" fill="#f3d9a8" />
<rect x="571.5" y="91.5" width="1.6" height="3.7" fill="#f29a4a" />
<rect x="571.5" y="95.2" width="1.6" height="2.6" fill="#3f7fd6" />
<text transform="translate(573.3,99.8) rotate(-45)" font-size="2.600" fill="#444" text-anchor="end" textLength="10.2" lengthAdjust="spacingAndGlyphs">10.06.2019</text>
<rect x="576.3" y="87.5" width="1.6" height="2.5" fill="#f6c04a" />
<rect x="576.3" y="90.0" width="1.6" height="1.4" fill="#f3d9a8" />
<rect x="576.3" y="91.4" width="1.6" height="3.7" fill="#f29a4a" />
<rect x="576.3" y="95.1" width="1.6" height="2.7" fill="#3f7fd6" />
<text transform="translate(578.1,99.8) rotate(-45)" font-size="2.600" fill="#444" text-anchor="end" textLength="10.2" lengthAdjust="spacingAndGlyphs">11.06.2019</text>
<rect x="581.0" y="87.4" width="1.6" height="2.5" fill="#f6c04a" />
<rect x="581.0" y="89.9" width="1.6" height="1.5" fill="#f3d9a8" />
<rect x="581.0" y="91.3" width="1.6" height="3.8" fill="#f29a4a" />
<rect x="581.0" y="95.1" width="1.6" height="2.7" fill="#3f7fd6" />
<text transform="translate(582.8,99.8) rotate(-45)" font-size="2.600" fill="#444" text-anchor="end" textLength="10.2" lengthAdjust="spacingAndGlyphs">12.06.2019</text>
<rect x="585.7" y="87.2" width="1.6" height="2.5" fill="#f6c04a" />
<rect x="585.7" y="89.8" width="1.6" height="1.5" fill="#f3d9a8" />
<rect x="585.7" y="91.3" width="1.6" height="3.8" fill="#f29a4a" />
<rect x="585.7" y="95.1" width="1.6" height="2.7" fill="#3f7fd6" />
<text transform="translate(587.5,99.8) rotate(-45)" font-size="2.600" fill="#444" text-anchor="end" textLength="10.2" lengthAdjust="spacingAndGlyphs">13.06.2019</text>
<rect x="590.5" y="87.1" width="1.6" height="2.6" fill="#f6c04a" />
<rect x="590.5" y="89.7" width="1.6" height="1.5" fill="#f3d9a8" />
<rect x="590.5" y="91.2" width="1.6" height="3.8" fill="#f29a4a" />
<rect x="590.5" y="95.0" width="1.6" height="2.8" fill="#3f7fd6" />
<text transform="translate(592.3,99.8) rotate(-45)" font-size="2.600" fill="#444" text-anchor="end" textLength="10.2" lengthAdjust="spacingAndGlyphs">14.06.2019</text>
<rect x="595.2" y="87.0" width="1.6" height="2.6" fill="#f6c04a" />
<rect x="595.2" y="89.6" width="1.6" height="1.5" fill="#f3d9a8" />
<rect x="595.2" y="91.1" width="1.6" height="3.9" fill="#f29a4a" />
<rect x="595.2" y="95.0" width="1.6" height="2.8" fill="#3f7fd6" />
<text transform="translate(597.0,99.8) rotate(-45)" font-size="2.600" fill="#444" text-anchor="end" textLength="10.2" lengthAdjust="spacingAndGlyphs">15.06.2019</text>
<text x="542" y="82.8" font-size="3.6" fill="#333" textLength="38" lengthAdjust="spacingAndGlyphs" font-weight="bold">Название диаграммы</text>
<rect x="544.6" y="109.2" width="1.6" height="1.6" fill="#f6c04a" />
<text x="547.1" y="111" font-size="2.800" fill="#333" textLength="32.2" lengthAdjust="spacingAndGlyphs">Продажи по Торговой точке 4, тыс. руб.</text>
<rect x="544.6" y="113.5" width="1.6" height="1.6" fill="#c9c9c9" />
<text x="547.1" y="115.3" font-size="2.800" fill="#333" textLength="32.2" lengthAdjust="spacingAndGlyphs">Продажи по Торговой точке 3, тыс. руб.</text>
<rect x="544.6" y="117.7" width="1.6" height="1.6" fill="#f29a4a" />
<text x="547.1" y="119.5" font-size="2.800" fill="#333" textLength="32.2" lengthAdjust="spacingAndGlyphs">Продажи по Торговой точке 2, тыс. руб.</text>
<rect x="544.6" y="121.6" width="1.6" height="1.6" fill="#3f7fd6" />
<text x="547.1" y="123.4" font-size="2.800" fill="#333" textLength="32.2" lengthAdjust="spacingAndGlyphs">Продажи по Торговой точке 1, тыс. руб.</text>
<rect x="616.9" y="87.5" width="2.4" height="2.5" fill="#f7dca6" />
<rect x="616.9" y="90.0" width="2.4" height="1.5" fill="#f5e6c8" />
<rect x="616.9" y="91.5" width="2.4" height="3.8" fill="#f8cf9c" />
<rect x="616.9" y="95.3" width="2.4" height="2.7" fill="#9dc3ea" />
<text transform="translate(619.1,100) rotate(-45)" font-size="2.600" fill="#444" text-anchor="end" textLength="8.5" lengthAdjust="spacingAndGlyphs">01.06.2019</text>
<rect x="621.7" y="87.4" width="2.4" height="2.6" fill="#f7dca6" />
<rect x="621.7" y="89.9" width="2.4" height="1.5" fill="#f5e6c8" />
<rect x="621.7" y="91.4" width="2.4" height="3.8" fill="#f8cf9c" />
<rect x="621.7" y="95.2" width="2.4" height="2.8" fill="#9dc3ea" />
<text transform="translate(623.9,100) rotate(-45)" font-size="2.600" fill="#444" text-anchor="end" textLength="8.5" lengthAdjust="spacingAndGlyphs">02.06.2019</text>
<rect x="626.5" y="87.2" width="2.4" height="2.6" fill="#f7dca6" />
<rect x="626.5" y="89.8" width="2.4" height="1.5" fill="#f5e6c8" />
<rect x="626.5" y="91.3" width="2.4" height="3.9" fill="#f8cf9c" />
<rect x="626.5" y="95.2" width="2.4" height="2.8" fill="#9dc3ea" />
<text transform="translate(628.7,100) rotate(-45)" font-size="2.600" fill="#444" text-anchor="end" textLength="8.5" lengthAdjust="spacingAndGlyphs">03.06.2019</text>
<rect x="631.3" y="87.1" width="2.4" height="2.6" fill="#f7dca6" />
<rect x="631.3" y="89.7" width="2.4" height="1.5" fill="#f5e6c8" />
<rect x="631.3" y="91.2" width="2.4" height="3.9" fill="#f8cf9c" />
<rect x="631.3" y="95.2" width="2.4" height="2.8" fill="#9dc3ea" />
<text transform="translate(633.5,100) rotate(-45)" font-size="2.600" fill="#444" text-anchor="end" textLength="8.5" lengthAdjust="spacingAndGlyphs">04.06.2019</text>
<rect x="636.1" y="86.9" width="2.4" height="2.7" fill="#f7dca6" />
<rect x="636.1" y="89.6" width="2.4" height="1.6" fill="#f5e6c8" />
<rect x="636.1" y="91.1" width="2.4" height="4.0" fill="#f8cf9c" />
<rect x="636.1" y="95.1" width="2.4" height="2.9" fill="#9dc3ea" />
<text transform="translate(638.3,100) rotate(-45)" font-size="2.600" fill="#444" text-anchor="end" textLength="8.5" lengthAdjust="spacingAndGlyphs">05.06.2019</text>
<rect x="640.9" y="86.8" width="2.4" height="2.7" fill="#f7dca6" />
<rect x="640.9" y="89.5" width="2.4" height="1.6" fill="#f5e6c8" />
<rect x="640.9" y="91.0" width="2.4" height="4.0" fill="#f8cf9c" />
<rect x="640.9" y="95.1" width="2.4" height="2.9" fill="#9dc3ea" />
<text transform="translate(643.1,100) rotate(-45)" font-size="2.600" fill="#444" text-anchor="end" textLength="8.5" lengthAdjust="spacingAndGlyphs">06.06.2019</text>
<rect x="645.7" y="86.6" width="2.4" height="2.7" fill="#f7dca6" />
<rect x="645.7" y="89.4" width="2.4" height="1.6" fill="#f5e6c8" />
<rect x="645.7" y="91.0" width="2.4" height="4.1" fill="#f8cf9c" />
<rect x="645.7" y="95.0" width="2.4" height="3.0" fill="#9dc3ea" />
<text transform="translate(647.9,100) rotate(-45)" font-size="2.600" fill="#444" text-anchor="end" textLength="8.5" lengthAdjust="spacingAndGlyphs">07.06.2019</text>
<rect x="650.5" y="86.5" width="2.4" height="2.8" fill="#f7dca6" />
<rect x="650.5" y="89.3" width="2.4" height="1.6" fill="#f5e6c8" />
<rect x="650.5" y="90.9" width="2.4" height="4.1" fill="#f8cf9c" />
<rect x="650.5" y="95.0" width="2.4" height="3.0" fill="#9dc3ea" />
<text transform="translate(652.7,100) rotate(-45)" font-size="2.600" fill="#444" text-anchor="end" textLength="8.5" lengthAdjust="spacingAndGlyphs">08.06.2019</text>
<rect x="655.3" y="86.4" width="2.4" height="2.8" fill="#f7dca6" />
<rect x="655.3" y="89.2" width="2.4" height="1.6" fill="#f5e6c8" />
<rect x="655.3" y="90.8" width="2.4" height="4.2" fill="#f8cf9c" />
<rect x="655.3" y="95.0" width="2.4" height="3.0" fill="#9dc3ea" />
<text transform="translate(657.5,100) rotate(-45)" font-size="2.600" fill="#444" text-anchor="end" textLength="8.5" lengthAdjust="spacingAndGlyphs">09.06.2019</text>
<rect x="660.1" y="86.2" width="2.4" height="2.8" fill="#f7dca6" />
<rect x="660.1" y="89.0" width="2.4" height="1.6" fill="#f5e6c8" />
<rect x="660.1" y="90.7" width="2.4" height="4.2" fill="#f8cf9c" />
<rect x="660.1" y="94.9" width="2.4" height="3.1" fill="#9dc3ea" />
<text transform="translate(662.3,100) rotate(-45)" font-size="2.600" fill="#444" text-anchor="end" textLength="8.5" lengthAdjust="spacingAndGlyphs">10.06.2019</text>
<rect x="664.9" y="86.1" width="2.4" height="2.9" fill="#f7dca6" />
<rect x="664.9" y="88.9" width="2.4" height="1.7" fill="#f5e6c8" />
<rect x="664.9" y="90.6" width="2.4" height="4.3" fill="#f8cf9c" />
<rect x="664.9" y="94.9" width="2.4" height="3.1" fill="#9dc3ea" />
<text transform="translate(667.1,100) rotate(-45)" font-size="2.600" fill="#444" text-anchor="end" textLength="8.5" lengthAdjust="spacingAndGlyphs">11.06.2019</text>
<rect x="669.7" y="85.9" width="2.4" height="2.9" fill="#f7dca6" />
<rect x="669.7" y="88.8" width="2.4" height="1.7" fill="#f5e6c8" />
<rect x="669.7" y="90.5" width="2.4" height="4.3" fill="#f8cf9c" />
<rect x="669.7" y="94.9" width="2.4" height="3.1" fill="#9dc3ea" />
<text transform="translate(671.9,100) rotate(-45)" font-size="2.600" fill="#444" text-anchor="end" textLength="8.5" lengthAdjust="spacingAndGlyphs">12.06.2019</text>
<rect x="674.5" y="85.8" width="2.4" height="2.9" fill="#f7dca6" />
<rect x="674.5" y="88.7" width="2.4" height="1.7" fill="#f5e6c8" />
<rect x="674.5" y="90.4" width="2.4" height="4.4" fill="#f8cf9c" />
<rect x="674.5" y="94.8" width="2.4" height="3.2" fill="#9dc3ea" />
<text transform="translate(676.7,100) rotate(-45)" font-size="2.600" fill="#444" text-anchor="end" textLength="8.5" lengthAdjust="spacingAndGlyphs">13.06.2019</text>
<rect x="679.3" y="85.6" width="2.4" height="3.0" fill="#f7dca6" />
<rect x="679.3" y="88.6" width="2.4" height="1.7" fill="#f5e6c8" />
<rect x="679.3" y="90.3" width="2.4" height="4.4" fill="#f8cf9c" />
<rect x="679.3" y="94.8" width="2.4" height="3.2" fill="#9dc3ea" />
<text transform="translate(681.5,100) rotate(-45)" font-size="2.600" fill="#444" text-anchor="end" textLength="8.5" lengthAdjust="spacingAndGlyphs">14.06.2019</text>
<rect x="684.1" y="85.5" width="2.4" height="3.0" fill="#f7dca6" />
<rect x="684.1" y="88.5" width="2.4" height="1.8" fill="#f5e6c8" />
<rect x="684.1" y="90.2" width="2.4" height="4.5" fill="#f8cf9c" />
<rect x="684.1" y="94.8" width="2.4" height="3.2" fill="#9dc3ea" />
<text transform="translate(686.3,100) rotate(-45)" font-size="2.600" fill="#444" text-anchor="end" textLength="8.5" lengthAdjust="spacingAndGlyphs">15.06.2019</text>
<rect x="612.5" y="85.5" width="1.6" height="12.5" fill="#c4c4c4" />
<text x="637" y="82.3" font-size="3.2" fill="#777" textLength="28" lengthAdjust="spacingAndGlyphs">Название диаграммы</text>
<rect x="634.3" y="109.7" width="1.6" height="1.6" fill="#f6c04a" />
<text x="636.8" y="111.5" font-size="2.800" fill="#333" textLength="32.2" lengthAdjust="spacingAndGlyphs">Продажи по Торговой точке 4, тыс. руб.</text>
<rect x="634.3" y="113.7" width="1.6" height="1.6" fill="#c9c9c9" />
<text x="636.8" y="115.5" font-size="2.800" fill="#333" textLength="32.2" lengthAdjust="spacingAndGlyphs">Продажи по Торговой точке 3, тыс. руб.</text>
<rect x="634.3" y="117.5" width="1.6" height="1.6" fill="#f29a4a" />
<text x="636.8" y="119.3" font-size="2.800" fill="#333" textLength="32.2" lengthAdjust="spacingAndGlyphs">Продажи по Торговой точке 2, тыс. руб.</text>
<rect x="634.3" y="121.2" width="1.6" height="1.6" fill="#3f7fd6" />
<text x="636.8" y="123" font-size="2.800" fill="#333" textLength="32.2" lengthAdjust="spacingAndGlyphs">Продажи по Торговой точке 1, тыс. руб.</text>
<text x="408.5" y="153.2" font-size="12" fill="#262626" textLength="87.5" lengthAdjust="spacingAndGlyphs" >Стили диаграмм</text>
<g shape-rendering="crispEdges"><rect x="740.500" y="73.500" width="28" height="25" fill="#fff" stroke="#808080"/><rect x="740" y="73" width="29" height="4.500" fill="#808080"/><path d="M747.500 78v20M754.500 78v20M761.500 78v20M741 82.500h28M741 87.500h28M741 92.500h28" stroke="#c8c8c8" fill="none"/><path d="M754.500 82.500h7v10h-11.500M754.500 82.500v10M754.500 87.500h7" fill="none" stroke="#ed7d31"/></g>
<path d="M747.300 91.500c0-5.500 3.500-8.700 8.700-8.700" fill="none" stroke="#2f6fc4" stroke-width="2"/><path d="M754 79l4.300 3.800-4.300 3.800" fill="none" stroke="#2f6fc4" stroke-width="1.800"/><path d="M743.500 89.300l3.800 4.300 3.800-4.300" fill="none" stroke="#2f6fc4" stroke-width="1.800"/>
<text x="732.7" y="117.8" font-size="12" fill="#262626" textLength="44.3" lengthAdjust="spacingAndGlyphs" >Строка/</text>
<text x="732" y="134.2" font-size="12" fill="#262626" textLength="45" lengthAdjust="spacingAndGlyphs" >столбец</text>
<g shape-rendering="crispEdges"><rect x="791.500" y="74.500" width="28" height="24" fill="#fff" stroke="#808080"/><rect x="791" y="74" width="29" height="4" fill="#808080"/><path d="M798.500 78v20M805.500 78v20M812.500 78v20M792 82.500h28M792 88.500h28M792 93.500h28" stroke="#c8c8c8" fill="none"/><rect x="798.500" y="83.500" width="14" height="10" fill="none" stroke="#ed7d31"/><rect x="804" y="86" width="19" height="18" fill="#f3f3f3"/><rect x="805.500" y="87.500" width="16" height="15" fill="#fff" stroke="#808080"/><rect x="807.500" y="94.500" width="3" height="8" fill="#d4d4d4" stroke="#808080"/><rect x="811.500" y="90.500" width="3" height="12" fill="#d4d4d4" stroke="#808080"/><rect x="816.500" y="95.500" width="3" height="7" fill="#d4d4d4" stroke="#808080"/></g>
<text x="782.6" y="117.8" font-size="12" fill="#262626" textLength="46.2" lengthAdjust="spacingAndGlyphs" >Выбрать</text>
<text x="785" y="134.2" font-size="12" fill="#262626" textLength="41" lengthAdjust="spacingAndGlyphs" >данные</text>
<text x="759" y="153.2" font-size="12" fill="#262626" textLength="41" lengthAdjust="spacingAndGlyphs" >Данные</text>
<g shape-rendering="crispEdges"><rect x="876" y="82" width="7" height="18" fill="url(#gd)"/><rect x="884" y="74" width="7" height="26" fill="#f0c68a"/><rect x="892" y="79" width="7" height="21" fill="#808080"/></g>
<text x="850.5" y="117.8" font-size="12" fill="#262626" textLength="75.3" lengthAdjust="spacingAndGlyphs" >Изменить тип</text>
<text x="856" y="134.2" font-size="12" fill="#262626" textLength="64" lengthAdjust="spacingAndGlyphs" >диаграммы</text>
<text x="877" y="153.2" font-size="12" fill="#262626" textLength="21" lengthAdjust="spacingAndGlyphs" >Тип</text>
<g shape-rendering="crispEdges"><path d="M969.500 74.500h27v20.500h-8l-4 3.500h-15z" fill="#fff" stroke="#8a8a8a"/><path d="M976.500 98.500l3-3.500h9" fill="none" stroke="#8a8a8a"/><rect x="974.500" y="82.500" width="4" height="9" fill="#fff" stroke="#808080"/><rect x="978.500" y="77.500" width="4" height="14" fill="#d4d4d4" stroke="#808080"/><rect x="984.500" y="81.500" width="4" height="10" fill="#fff" stroke="#808080"/><rect x="988.500" y="84.500" width="4" height="7" fill="#d4d4d4" stroke="#808080"/></g>
<text x="946.9" y="117.8" font-size="12" fill="#262626" textLength="71.6" lengthAdjust="spacingAndGlyphs" >Переместить</text>
<text x="952" y="134.2" font-size="12" fill="#262626" textLength="61.5" lengthAdjust="spacingAndGlyphs" >диаграмму</text>
<text x="943" y="153.2" font-size="12" fill="#262626" textLength="78.8" lengthAdjust="spacingAndGlyphs" >Расположение</text>
<path d="M1047.500 152.500l5-4.500 5 4.500" fill="none" stroke="#555" stroke-width="1"/>
</g>
<g id="formulabar">
<g shape-rendering="crispEdges">
<rect x="6.5" y="168.5" width="155" height="25" fill="#fff" stroke="#d4d4d4"/>
<rect x="192.5" y="168.5" width="109" height="25" fill="#fff" stroke="#d4d4d4"/>
<rect x="305.5" y="168.5" width="755" height="25" fill="#fff" stroke="#d4d4d4"/>
</g>
<text x="13" y="186" font-size="13.5" fill="#333" textLength="82" lengthAdjust="spacingAndGlyphs" >Диаграмма 4</text>
<path d="M148 178l3.700 4 3.700-4z" fill="#777"/>
<rect x="176" y="174.5" width="2" height="2" fill="#a0a0a0" />
<rect x="176" y="179.5" width="2" height="2" fill="#a0a0a0" />
<rect x="176" y="184.5" width="2" height="2" fill="#a0a0a0" />
<path d="M206.500 176.500l9 9m0-9l-9 9" stroke="#c4c4c4" stroke-width="1.900" fill="none"/>
<path d="M241.500 181.500l3.500 4 7.500-9" stroke="#c4c4c4" stroke-width="2.300" fill="none"/>
<text x="278.3" y="186" font-size="14" fill="#606060" font-weight="bold" font-style="italic" font-family="'Liberation Serif', serif">f</text>
<text x="283" y="187.5" font-size="10" fill="#606060" font-weight="bold" font-style="italic" font-family="'Liberation Serif', serif">x</text>
<path d="M1049.400 178.600l3.300 3.300 3.300-3.300" fill="none" stroke="#444" stroke-width="1.900"/>
</g>
<g id="grid">
<g shape-rendering="crispEdges">
<rect x="1" y="223" width="1043" height="442" fill="#fff" />
<rect x="1" y="204" width="1043" height="19" fill="#e6e6e6" />
<rect x="1" y="223" width="25" height="442" fill="#e6e6e6" />
<line x1="137.5" y1="223" x2="137.5" y2="665" stroke="#d0d0d0" stroke-width="1" />
<line x1="290.5" y1="223" x2="290.5" y2="665" stroke="#d0d0d0" stroke-width="1" />
<line x1="443.5" y1="223" x2="443.5" y2="665" stroke="#d0d0d0" stroke-width="1" />
<line x1="592.5" y1="223" x2="592.5" y2="665" stroke="#d0d0d0" stroke-width="1" />
<line x1="742.5" y1="223" x2="742.5" y2="665" stroke="#d0d0d0" stroke-width="1" />
<line x1="806.5" y1="223" x2="806.5" y2="665" stroke="#d0d0d0" stroke-width="1" />
<line x1="870.5" y1="223" x2="870.5" y2="665" stroke="#d0d0d0" stroke-width="1" />
<line x1="934.5" y1="223" x2="934.5" y2="665" stroke="#d0d0d0" stroke-width="1" />
<line x1="998.5" y1="223" x2="998.5" y2="665" stroke="#d0d0d0" stroke-width="1" />
<line x1="1044.5" y1="223" x2="1044.5" y2="665" stroke="#d0d0d0" stroke-width="1" />
<line x1="26" y1="263.5" x2="1044" y2="263.5" stroke="#d0d0d0" stroke-width="1" />
<line x1="26" y1="283.5" x2="1044" y2="283.5" stroke="#d0d0d0" stroke-width="1" />
<line x1="26" y1="303.5" x2="1044" y2="303.5" stroke="#d0d0d0" stroke-width="1" />
<line x1="26" y1="323.5" x2="1044" y2="323.5" stroke="#d0d0d0" stroke-width="1" />
<line x1="26" y1="343.5" x2="1044" y2="343.5" stroke="#d0d0d0" stroke-width="1" />
<line x1="26" y1="363.5" x2="1044" y2="363.5" stroke="#d0d0d0" stroke-width="1" />
<line x1="26" y1="383.5" x2="1044" y2="383.5" stroke="#d0d0d0" stroke-width="1" />
<line x1="26" y1="403.5" x2="1044" y2="403.5" stroke="#d0d0d0" stroke-width="1" />
<line x1="26" y1="423.5" x2="1044" y2="423.5" stroke="#d0d0d0" stroke-width="1" />
<line x1="26" y1="443.5" x2="1044" y2="443.5" stroke="#d0d0d0" stroke-width="1" />
<line x1="26" y1="463.5" x2="1044" y2="463.5" stroke="#d0d0d0" stroke-width="1" />
<line x1="26" y1="483.5" x2="1044" y2="483.5" stroke="#d0d0d0" stroke-width="1" />
<line x1="26" y1="503.5" x2="1044" y2="503.5" stroke="#d0d0d0" stroke-width="1" />
<line x1="26" y1="523.5" x2="1044" y2="523.5" stroke="#d0d0d0" stroke-width="1" />
<line x1="26" y1="543.5" x2="1044" y2="543.5" stroke="#d0d0d0" stroke-width="1" />
<line x1="26" y1="563.5" x2="1044" y2="563.5" stroke="#d0d0d0" stroke-width="1" />
<line x1="26" y1="583.5" x2="1044" y2="583.5" stroke="#d0d0d0" stroke-width="1" />
<line x1="26" y1="603.5" x2="1044" y2="603.5" stroke="#d0d0d0" stroke-width="1" />
<line x1="26" y1="623.5" x2="1044" y2="623.5" stroke="#d0d0d0" stroke-width="1" />
<line x1="26" y1="643.5" x2="1044" y2="643.5" stroke="#d0d0d0" stroke-width="1" />
<line x1="26" y1="663.5" x2="1044" y2="663.5" stroke="#d0d0d0" stroke-width="1" />
<line x1="26.5" y1="204" x2="26.5" y2="223" stroke="#b0b0b0" stroke-width="1" />
<line x1="137.5" y1="204" x2="137.5" y2="223" stroke="#b0b0b0" stroke-width="1" />
<line x1="290.5" y1="204" x2="290.5" y2="223" stroke="#b0b0b0" stroke-width="1" />
<line x1="443.5" y1="204" x2="443.5" y2="223" stroke="#b0b0b0" stroke-width="1" />
<line x1="592.5" y1="204" x2="592.5" y2="223" stroke="#b0b0b0" stroke-width="1" />
<line x1="742.5" y1="204" x2="742.5" y2="223" stroke="#b0b0b0" stroke-width="1" />
<line x1="806.5" y1="204" x2="806.5" y2="223" stroke="#b0b0b0" stroke-width="1" />
<line x1="870.5" y1="204" x2="870.5" y2="223" stroke="#b0b0b0" stroke-width="1" />
<line x1="934.5" y1="204" x2="934.5" y2="223" stroke="#b0b0b0" stroke-width="1" />
<line x1="998.5" y1="204" x2="998.5" y2="223" stroke="#b0b0b0" stroke-width="1" />
<line x1="1" y1="223.5" x2="26" y2="223.5" stroke="#c4c4c4" stroke-width="1" />
<line x1="1" y1="263.5" x2="26" y2="263.5" stroke="#c4c4c4" stroke-width="1" />
<line x1="1" y1="283.5" x2="26" y2="283.5" stroke="#c4c4c4" stroke-width="1" />
<line x1="1" y1="303.5" x2="26" y2="303.5" stroke="#c4c4c4" stroke-width="1" />
<line x1="1" y1="323.5" x2="26" y2="323.5" stroke="#c4c4c4" stroke-width="1" />
<line x1="1" y1="343.5" x2="26" y2="343.5" stroke="#c4c4c4" stroke-width="1" />
<line x1="1" y1="363.5" x2="26" y2="363.5" stroke="#c4c4c4" stroke-width="1" />
<line x1="1" y1="383.5" x2="26" y2="383.5" stroke="#c4c4c4" stroke-width="1" />
<line x1="1" y1="403.5" x2="26" y2="403.5" stroke="#c4c4c4" stroke-width="1" />
<line x1="1" y1="423.5" x2="26" y2="423.5" stroke="#c4c4c4" stroke-width="1" />
<line x1="1" y1="443.5" x2="26" y2="443.5" stroke="#c4c4c4" stroke-width="1" />
<line x1="1" y1="463.5" x2="26" y2="463.5" stroke="#c4c4c4" stroke-width="1" />
<line x1="1" y1="483.5" x2="26" y2="483.5" stroke="#c4c4c4" stroke-width="1" />
<line x1="1" y1="503.5" x2="26" y2="503.5" stroke="#c4c4c4" stroke-width="1" />
<line x1="1" y1="523.5" x2="26" y2="523.5" stroke="#c4c4c4" stroke-width="1" />
<line x1="1" y1="543.5" x2="26" y2="543.5" stroke="#c4c4c4" stroke-width="1" />
<line x1="1" y1="563.5" x2="26" y2="563.5" stroke="#c4c4c4" stroke-width="1" />
<line x1="1" y1="583.5" x2="26" y2="583.5" stroke="#c4c4c4" stroke-width="1" />
<line x1="1" y1="603.5" x2="26" y2="603.5" stroke="#c4c4c4" stroke-width="1" />
<line x1="1" y1="623.5" x2="26" y2="623.5" stroke="#c4c4c4" stroke-width="1" />
<line x1="1" y1="643.5" x2="26" y2="643.5" stroke="#c4c4c4" stroke-width="1" />
<line x1="1" y1="663.5" x2="26" y2="663.5" stroke="#c4c4c4" stroke-width="1" />
<line x1="1" y1="223.5" x2="1044" y2="223.5" stroke="#ababab" stroke-width="1" />
<line x1="26.5" y1="223" x2="26.5" y2="665" stroke="#9c9c9c" stroke-width="1" />
<line x1="1" y1="665.5" x2="1045" y2="665.5" stroke="#8c8c8c" stroke-width="1" />
<line x1="1044.5" y1="223" x2="1044.5" y2="666" stroke="#b0b0b0" stroke-width="1" />
<rect x="27" y="224" width="110" height="39" fill="#97c24e" />
<rect x="138" y="224" width="604" height="39" fill="#97c24e" />
<rect x="27" y="264" width="111" height="300" fill="#f5b716" />
<rect x="138" y="264" width="604" height="300" fill="#e9eff9" />
<line x1="27" y1="264.5" x2="136" y2="264.5" stroke="#fff" stroke-width="1" />
<line x1="27" y1="562.5" x2="743" y2="562.5" stroke="#fff" stroke-width="1" />
<line x1="27.5" y1="264" x2="27.5" y2="563" stroke="#fff" stroke-width="1" />
<line x1="136.5" y1="264" x2="136.5" y2="563" stroke="#fff" stroke-width="1" />
<line x1="139.5" y1="264" x2="139.5" y2="563" stroke="#fff" stroke-width="1" />
<line x1="740.5" y1="264" x2="740.5" y2="563" stroke="#fff" stroke-width="1" />
<line x1="290.5" y1="224" x2="290.5" y2="564" stroke="#000" stroke-width="1" />
<line x1="443.5" y1="224" x2="443.5" y2="564" stroke="#000" stroke-width="1" />
<line x1="592.5" y1="224" x2="592.5" y2="564" stroke="#000" stroke-width="1" />
<line x1="27" y1="283.5" x2="742" y2="283.5" stroke="#000" stroke-width="1" />
<line x1="27" y1="303.5" x2="742" y2="303.5" stroke="#000" stroke-width="1" />
<line x1="27" y1="323.5" x2="742" y2="323.5" stroke="#000" stroke-width="1" />
<line x1="27" y1="343.5" x2="742" y2="343.5" stroke="#000" stroke-width="1" />
<line x1="27" y1="363.5" x2="742" y2="363.5" stroke="#000" stroke-width="1" />
<line x1="27" y1="383.5" x2="742" y2="383.5" stroke="#000" stroke-width="1" />
<line x1="27" y1="403.5" x2="742" y2="403.5" stroke="#000" stroke-width="1" />
<line x1="27" y1="423.5" x2="742" y2="423.5" stroke="#000" stroke-width="1" />
<line x1="27" y1="443.5" x2="742" y2="443.5" stroke="#000" stroke-width="1" />
<line x1="27" y1="463.5" x2="742" y2="463.5" stroke="#000" stroke-width="1" />
<line x1="27" y1="483.5" x2="742" y2="483.5" stroke="#000" stroke-width="1" />
<line x1="27" y1="503.5" x2="742" y2="503.5" stroke="#000" stroke-width="1" />
<line x1="27" y1="523.5" x2="742" y2="523.5" stroke="#000" stroke-width="1" />
<line x1="27" y1="543.5" x2="742" y2="543.5" stroke="#000" stroke-width="1" />
<line x1="27" y1="563.5" x2="742" y2="563.5" stroke="#000" stroke-width="1" />
<line x1="139" y1="224.5" x2="742" y2="224.5" stroke="#fff" stroke-width="1" />
<rect x="138" y="224" width="1" height="39" fill="#fff" />
<rect x="741" y="224" width="1" height="39" fill="#fff" />
<line x1="139" y1="262.5" x2="742" y2="262.5" stroke="#fff" stroke-width="1" />
<rect x="138" y="263" width="606" height="2" fill="#b03a2e" />
<rect x="136" y="226" width="2" height="39" fill="#b03a2e" />
<rect x="742" y="226" width="2" height="39" fill="#b03a2e" />
<rect x="134" y="223" width="7" height="4" fill="#fff" />
<rect x="135" y="224" width="5" height="2" fill="#b03a2e" />
<rect x="739" y="223" width="7" height="4" fill="#fff" />
<rect x="740" y="224" width="5" height="2" fill="#b03a2e" />
<rect x="739" y="260" width="7" height="7" fill="#fff" />
<rect x="740" y="261" width="5" height="5" fill="#b03a2e" />
<line x1="27" y1="263" x2="138" y2="263" stroke="#7b47b9" stroke-width="2" />
<line x1="138" y1="264" x2="138" y2="564" stroke="#7b47b9" stroke-width="2" />
<line x1="27" y1="564" x2="138" y2="564" stroke="#7b47b9" stroke-width="2" />
<rect x="134" y="260" width="7" height="7" fill="#fff" />
<rect x="135" y="261" width="5" height="5" fill="#7b47b9" />
<rect x="134" y="560" width="7" height="7" fill="#fff" />
<rect x="135" y="561" width="5" height="5" fill="#7b47b9" />
<rect x="27" y="260" width="3" height="7" fill="#fff" />
<rect x="27" y="261" width="2" height="5" fill="#7b47b9" />
<rect x="27" y="560" width="3" height="7" fill="#fff" />
<rect x="27" y="561" width="2" height="5" fill="#7b47b9" />
<rect x="141" y="563" width="603" height="2" fill="#2f66c4" />
<rect x="742" y="267" width="2" height="298" fill="#2f66c4" />
</g>
<rect x="28.5" y="225.5" width="106" height="35" fill="none" stroke="#b9a86a" stroke-dasharray="1 1" shape-rendering="crispEdges"/>
<path d="M23 208.500v10.500h-10.500z" fill="#b4b4b4"/>
<text x="81.5" y="218" font-size="12.5" fill="#333" text-anchor="middle" >A</text>
<text x="213.5" y="218" font-size="12.5" fill="#333" text-anchor="middle" >B</text>
<text x="366.5" y="218" font-size="12.5" fill="#333" text-anchor="middle" >C</text>
<text x="517.5" y="218" font-size="12.5" fill="#333" text-anchor="middle" >D</text>
<text x="667.0" y="218" font-size="12.5" fill="#333" text-anchor="middle" >E</text>
<text x="774.0" y="218" font-size="12.5" fill="#333" text-anchor="middle" >F</text>
<text x="838.0" y="218" font-size="12.5" fill="#333" text-anchor="middle" >G</text>
<text x="902.0" y="218" font-size="12.5" fill="#333" text-anchor="middle" >H</text>
<text x="966.0" y="218" font-size="12.5" fill="#333" text-anchor="middle" >I</text>
<text x="1030" y="218" font-size="12.5" fill="#333" text-anchor="middle" >J</text>
<text x="13.9" y="258.5" font-size="12.4" fill="#333" text-anchor="middle" >1</text>
<text x="13.9" y="278.5" font-size="12.4" fill="#333" text-anchor="middle" >2</text>
<text x="13.9" y="298.5" font-size="12.4" fill="#333" text-anchor="middle" >3</text>
<text x="13.9" y="318.5" font-size="12.4" fill="#333" text-anchor="middle" >4</text>
<text x="13.9" y="338.5" font-size="12.4" fill="#333" text-anchor="middle" >5</text>
<text x="13.9" y="358.5" font-size="12.4" fill="#333" text-anchor="middle" >6</text>
<text x="13.9" y="378.5" font-size="12.4" fill="#333" text-anchor="middle" >7</text>
<text x="13.9" y="398.5" font-size="12.4" fill="#333" text-anchor="middle" >8</text>
<text x="13.9" y="418.5" font-size="12.4" fill="#333" text-anchor="middle" >9</text>
<text x="13.9" y="438.5" font-size="12.4" fill="#333" text-anchor="middle" >10</text>
<text x="13.9" y="458.5" font-size="12.4" fill="#333" text-anchor="middle" >11</text>
<text x="13.9" y="478.5" font-size="12.4" fill="#333" text-anchor="middle" >12</text>
<text x="13.9" y="498.5" font-size="12.4" fill="#333" text-anchor="middle" >13</text>
<text x="13.9" y="518.5" font-size="12.4" fill="#333" text-anchor="middle" >14</text>
<text x="13.9" y="538.5" font-size="12.4" fill="#333" text-anchor="middle" >15</text>
<text x="13.9" y="558.5" font-size="12.4" fill="#333" text-anchor="middle" >16</text>
<text x="13.9" y="578.5" font-size="12.4" fill="#333" text-anchor="middle" >17</text>
<text x="13.9" y="598.5" font-size="12.4" fill="#333" text-anchor="middle" >18</text>
<text x="13.9" y="618.5" font-size="12.4" fill="#333" text-anchor="middle" >19</text>
<text x="13.9" y="638.5" font-size="12.4" fill="#333" text-anchor="middle" >20</text>
<text x="13.9" y="658.5" font-size="12.4" fill="#333" text-anchor="middle" >21</text>
<text x="140.2" y="239" font-size="12.6" fill="#1a1a1a" textLength="137.6" lengthAdjust="spacingAndGlyphs" >Продажи по Торговой</text>
<text x="140" y="258.3" font-size="12.6" fill="#1a1a1a" textLength="107.6" lengthAdjust="spacingAndGlyphs" >точке 1, тыс. руб.</text>
<text x="293.2" y="239" font-size="12.6" fill="#1a1a1a" textLength="137.6" lengthAdjust="spacingAndGlyphs" >Продажи по Торговой</text>
<text x="293" y="258.3" font-size="12.6" fill="#1a1a1a" textLength="107.6" lengthAdjust="spacingAndGlyphs" >точке 2, тыс. руб.</text>
<text x="446.2" y="239" font-size="12.6" fill="#1a1a1a" textLength="137.6" lengthAdjust="spacingAndGlyphs" >Продажи по Торговой</text>
<text x="446" y="258.3" font-size="12.6" fill="#1a1a1a" textLength="107.6" lengthAdjust="spacingAndGlyphs" >точке 3, тыс. руб.</text>
<text x="594.7" y="239" font-size="12.6" fill="#1a1a1a" textLength="137.6" lengthAdjust="spacingAndGlyphs" >Продажи по Торговой</text>
<text x="594.5" y="258.3" font-size="12.6" fill="#1a1a1a" textLength="107.6" lengthAdjust="spacingAndGlyphs" >точке 4, тыс. руб.</text>
<text x="134.9" y="278.5" font-size="12.6" fill="#111" textLength="62.9" lengthAdjust="spacingAndGlyphs" text-anchor="end" >01.06.2019</text>
<text x="287" y="278.5" font-size="12.6" fill="#111" textLength="37.8" lengthAdjust="spacingAndGlyphs" text-anchor="end" >25,223</text>
<text x="440" y="278.5" font-size="12.6" fill="#111" textLength="37.8" lengthAdjust="spacingAndGlyphs" text-anchor="end" >33,224</text>
<text x="589" y="278.5" font-size="12.6" fill="#111" textLength="37.8" lengthAdjust="spacingAndGlyphs" text-anchor="end" >14,557</text>
<text x="740" y="278.5" font-size="12.6" fill="#111" textLength="37.8" lengthAdjust="spacingAndGlyphs" text-anchor="end" >24,334</text>
<text x="134.9" y="298.5" font-size="12.6" fill="#111" textLength="62.9" lengthAdjust="spacingAndGlyphs" text-anchor="end" >02.06.2019</text>
<text x="287" y="298.5" font-size="12.6" fill="#111" textLength="37.8" lengthAdjust="spacingAndGlyphs" text-anchor="end" >25,475</text>
<text x="440" y="298.5" font-size="12.6" fill="#111" textLength="37.8" lengthAdjust="spacingAndGlyphs" text-anchor="end" >33,722</text>
<text x="589" y="298.5" font-size="12.6" fill="#111" textLength="37.8" lengthAdjust="spacingAndGlyphs" text-anchor="end" >14,673</text>
<text x="740" y="298.5" font-size="12.6" fill="#111" textLength="37.8" lengthAdjust="spacingAndGlyphs" text-anchor="end" >24,456</text>
<text x="134.9" y="318.5" font-size="12.6" fill="#111" textLength="62.9" lengthAdjust="spacingAndGlyphs" text-anchor="end" >03.06.2019</text>
<text x="287" y="318.5" font-size="12.6" fill="#111" textLength="30.9" lengthAdjust="spacingAndGlyphs" text-anchor="end" >25,73</text>
<text x="134.9" y="338.5" font-size="12.6" fill="#111" textLength="62.9" lengthAdjust="spacingAndGlyphs" text-anchor="end" >04.06.2019</text>
<text x="287" y="338.5" font-size="12.6" fill="#111" textLength="37.8" lengthAdjust="spacingAndGlyphs" text-anchor="end" >25,987</text>
<text x="134.9" y="358.5" font-size="12.6" fill="#111" textLength="62.9" lengthAdjust="spacingAndGlyphs" text-anchor="end" >05.06.2019</text>
<text x="287" y="358.5" font-size="12.6" fill="#111" textLength="37.8" lengthAdjust="spacingAndGlyphs" text-anchor="end" >26,247</text>
<text x="134.9" y="378.5" font-size="12.6" fill="#111" textLength="62.9" lengthAdjust="spacingAndGlyphs" text-anchor="end" >06.06.2019</text>
<text x="287" y="378.5" font-size="12.6" fill="#111" textLength="30.9" lengthAdjust="spacingAndGlyphs" text-anchor="end" >26,51</text>
<text x="134.9" y="398.5" font-size="12.6" fill="#111" textLength="62.9" lengthAdjust="spacingAndGlyphs" text-anchor="end" >07.06.2019</text>
<text x="287" y="398.5" font-size="12.6" fill="#111" textLength="37.8" lengthAdjust="spacingAndGlyphs" text-anchor="end" >26,775</text>
<text x="134.9" y="418.5" font-size="12.6" fill="#111" textLength="62.9" lengthAdjust="spacingAndGlyphs" text-anchor="end" >08.06.2019</text>
<text x="287" y="418.5" font-size="12.6" fill="#111" textLength="37.8" lengthAdjust="spacingAndGlyphs" text-anchor="end" >27,042</text>
<text x="134.9" y="438.5" font-size="12.6" fill="#111" textLength="62.9" lengthAdjust="spacingAndGlyphs" text-anchor="end" >09.06.2019</text>
<text x="287" y="438.5" font-size="12.6" fill="#111" textLength="37.8" lengthAdjust="spacingAndGlyphs" text-anchor="end" >27,313</text>
<text x="134.9" y="458.5" font-size="12.6" fill="#111" textLength="62.9" lengthAdjust="spacingAndGlyphs" text-anchor="end" >10.06.2019</text>
<text x="287" y="458.5" font-size="12.6" fill="#111" textLength="37.8" lengthAdjust="spacingAndGlyphs" text-anchor="end" >27,586</text>
<text x="134.9" y="478.5" font-size="12.6" fill="#111" textLength="62.9" lengthAdjust="spacingAndGlyphs" text-anchor="end" >11.06.2019</text>
<text x="287" y="478.5" font-size="12.6" fill="#111" textLength="37.8" lengthAdjust="spacingAndGlyphs" text-anchor="end" >27,862</text>
<text x="134.9" y="498.5" font-size="12.6" fill="#111" textLength="62.9" lengthAdjust="spacingAndGlyphs" text-anchor="end" >12.06.2019</text>
<text x="287" y="498.5" font-size="12.6" fill="#111" textLength="37.8" lengthAdjust="spacingAndGlyphs" text-anchor="end" >28,141</text>
<text x="134.9" y="518.5" font-size="12.6" fill="#111" textLength="62.9" lengthAdjust="spacingAndGlyphs" text-anchor="end" >13.06.2019</text>
<text x="287" y="518.5" font-size="12.6" fill="#111" textLength="37.8" lengthAdjust="spacingAndGlyphs" text-anchor="end" >28,422</text>
<text x="134.9" y="538.5" font-size="12.6" fill="#111" textLength="62.9" lengthAdjust="spacingAndGlyphs" text-anchor="end" >14.06.2019</text>
<text x="287" y="538.5" font-size="12.6" fill="#111" textLength="37.8" lengthAdjust="spacingAndGlyphs" text-anchor="end" >28,706</text>
<text x="134.9" y="558.5" font-size="12.6" fill="#111" textLength="62.9" lengthAdjust="spacingAndGlyphs" text-anchor="end" >15.06.2019</text>
<text x="287" y="558.5" font-size="12.6" fill="#111" textLength="37.8" lengthAdjust="spacingAndGlyphs" text-anchor="end" >28,993</text>
</g>
<g id="chart">
<rect x="295.5" y="300.5" width="479.0" height="287.0" fill="#fff" stroke="#9a9a9a" shape-rendering="crispEdges"/>
<text x="449.5" y="327.8" font-size="16.4" fill="#595959" textLength="171.5" lengthAdjust="spacingAndGlyphs" >Название диаграммы</text>
<line x1="332" y1="426.5" x2="760" y2="426.5" stroke="#d9d9d9" stroke-width="1" shape-rendering="crispEdges"/>
<text x="321.1" y="429.8" font-size="10.6" fill="#595959" text-anchor="end" >0</text>
<line x1="332" y1="413.5" x2="760" y2="413.5" stroke="#d9d9d9" stroke-width="1" shape-rendering="crispEdges"/>
<text x="321.1" y="416.8" font-size="10.6" fill="#595959" text-anchor="end" >20</text>
<line x1="332" y1="400.5" x2="760" y2="400.5" stroke="#d9d9d9" stroke-width="1" shape-rendering="crispEdges"/>
<text x="321.1" y="403.8" font-size="10.6" fill="#595959" text-anchor="end" >40</text>
<line x1="332" y1="387.5" x2="760" y2="387.5" stroke="#d9d9d9" stroke-width="1" shape-rendering="crispEdges"/>
<text x="321.1" y="390.8" font-size="10.6" fill="#595959" text-anchor="end" >60</text>
<line x1="332" y1="374.5" x2="760" y2="374.5" stroke="#d9d9d9" stroke-width="1" shape-rendering="crispEdges"/>
<text x="321.1" y="377.8" font-size="10.6" fill="#595959" text-anchor="end" >80</text>
<line x1="332" y1="361.5" x2="760" y2="361.5" stroke="#d9d9d9" stroke-width="1" shape-rendering="crispEdges"/>
<text x="321.1" y="364.8" font-size="10.6" fill="#595959" text-anchor="end" >100</text>
<line x1="332" y1="348.5" x2="760" y2="348.5" stroke="#d9d9d9" stroke-width="1" shape-rendering="crispEdges"/>
<text x="321.1" y="351.8" font-size="10.6" fill="#595959" text-anchor="end" >120</text>
<g shape-rendering="crispEdges">
<rect x="341" y="409.8" width="11" height="16.3" fill="#4472c4" />
<rect x="341" y="388.3" width="11" height="21.5" fill="#ed7d31" />
<rect x="341" y="378.9" width="11" height="9.4" fill="#a5a5a5" />
<rect x="341" y="363.2" width="11" height="15.7" fill="#f5b716" />
<line x1="332.5" y1="427" x2="332.5" y2="430" stroke="#d9d9d9" stroke-width="1" />
<rect x="370" y="409.6" width="11" height="16.5" fill="#4472c4" />
<rect x="370" y="387.9" width="11" height="21.8" fill="#ed7d31" />
<rect x="370" y="378.4" width="11" height="9.5" fill="#a5a5a5" />
<rect x="370" y="362.6" width="11" height="15.8" fill="#f5b716" />
<line x1="361.5" y1="427" x2="361.5" y2="430" stroke="#d9d9d9" stroke-width="1" />
<rect x="398" y="409.5" width="11" height="16.6" fill="#4472c4" />
<rect x="398" y="387.4" width="11" height="22.1" fill="#ed7d31" />
<rect x="398" y="377.8" width="11" height="9.6" fill="#a5a5a5" />
<rect x="398" y="361.9" width="11" height="15.9" fill="#f5b716" />
<line x1="390.5" y1="427" x2="390.5" y2="430" stroke="#d9d9d9" stroke-width="1" />
<rect x="427" y="409.3" width="11" height="16.8" fill="#4472c4" />
<rect x="427" y="386.9" width="11" height="22.4" fill="#ed7d31" />
<rect x="427" y="377.2" width="11" height="9.6" fill="#a5a5a5" />
<rect x="427" y="361.3" width="11" height="16.0" fill="#f5b716" />
<line x1="418.5" y1="427" x2="418.5" y2="430" stroke="#d9d9d9" stroke-width="1" />
<rect x="455" y="409.1" width="11" height="17.0" fill="#4472c4" />
<rect x="455" y="386.4" width="11" height="22.8" fill="#ed7d31" />
<rect x="455" y="376.7" width="11" height="9.7" fill="#a5a5a5" />
<rect x="455" y="360.6" width="11" height="16.0" fill="#f5b716" />
<line x1="446.5" y1="427" x2="446.5" y2="430" stroke="#d9d9d9" stroke-width="1" />
<rect x="484" y="409.0" width="11" height="17.1" fill="#4472c4" />
<rect x="484" y="385.9" width="11" height="23.1" fill="#ed7d31" />
<rect x="484" y="376.1" width="11" height="9.8" fill="#a5a5a5" />
<rect x="484" y="360.0" width="11" height="16.1" fill="#f5b716" />
<line x1="475.5" y1="427" x2="475.5" y2="430" stroke="#d9d9d9" stroke-width="1" />
<rect x="512" y="408.8" width="11" height="17.3" fill="#4472c4" />
<rect x="512" y="385.3" width="11" height="23.5" fill="#ed7d31" />
<rect x="512" y="375.5" width="11" height="9.9" fill="#a5a5a5" />
<rect x="512" y="359.3" width="11" height="16.2" fill="#f5b716" />
<line x1="504.5" y1="427" x2="504.5" y2="430" stroke="#d9d9d9" stroke-width="1" />
<rect x="541" y="408.6" width="11" height="17.5" fill="#4472c4" />
<rect x="541" y="384.8" width="11" height="23.8" fill="#ed7d31" />
<rect x="541" y="374.9" width="11" height="9.9" fill="#a5a5a5" />
<rect x="541" y="358.6" width="11" height="16.3" fill="#f5b716" />
<line x1="532.5" y1="427" x2="532.5" y2="430" stroke="#d9d9d9" stroke-width="1" />
<rect x="569" y="408.5" width="11" height="17.6" fill="#4472c4" />
<rect x="569" y="384.3" width="11" height="24.2" fill="#ed7d31" />
<rect x="569" y="374.3" width="11" height="10.0" fill="#a5a5a5" />
<rect x="569" y="357.9" width="11" height="16.4" fill="#f5b716" />
<line x1="560.5" y1="427" x2="560.5" y2="430" stroke="#d9d9d9" stroke-width="1" />
<rect x="598" y="408.3" width="11" height="17.8" fill="#4472c4" />
<rect x="598" y="383.7" width="11" height="24.5" fill="#ed7d31" />
<rect x="598" y="373.6" width="11" height="10.1" fill="#a5a5a5" />
<rect x="598" y="357.2" width="11" height="16.4" fill="#f5b716" />
<line x1="589.5" y1="427" x2="589.5" y2="430" stroke="#d9d9d9" stroke-width="1" />
<rect x="626" y="408.1" width="11" height="18.0" fill="#4472c4" />
<rect x="626" y="383.2" width="11" height="24.9" fill="#ed7d31" />
<rect x="626" y="373.0" width="11" height="10.2" fill="#a5a5a5" />
<rect x="626" y="356.5" width="11" height="16.5" fill="#f5b716" />
<line x1="618.5" y1="427" x2="618.5" y2="430" stroke="#d9d9d9" stroke-width="1" />
<rect x="655" y="407.9" width="11" height="18.2" fill="#4472c4" />
<rect x="655" y="382.6" width="11" height="25.3" fill="#ed7d31" />
<rect x="655" y="372.4" width="11" height="10.3" fill="#a5a5a5" />
<rect x="655" y="355.8" width="11" height="16.6" fill="#f5b716" />
<line x1="646.5" y1="427" x2="646.5" y2="430" stroke="#d9d9d9" stroke-width="1" />
<rect x="683" y="407.7" width="11" height="18.4" fill="#4472c4" />
<rect x="683" y="382.1" width="11" height="25.7" fill="#ed7d31" />
<rect x="683" y="371.7" width="11" height="10.3" fill="#a5a5a5" />
<rect x="683" y="355.0" width="11" height="16.7" fill="#f5b716" />
<line x1="674.5" y1="427" x2="674.5" y2="430" stroke="#d9d9d9" stroke-width="1" />
<rect x="712" y="407.6" width="11" height="18.5" fill="#4472c4" />
<rect x="712" y="381.5" width="11" height="26.0" fill="#ed7d31" />
<rect x="712" y="371.1" width="11" height="10.4" fill="#a5a5a5" />
<rect x="712" y="354.3" width="11" height="16.8" fill="#f5b716" />
<line x1="703.5" y1="427" x2="703.5" y2="430" stroke="#d9d9d9" stroke-width="1" />
<rect x="740" y="407.4" width="11" height="18.7" fill="#4472c4" />
<rect x="740" y="380.9" width="11" height="26.4" fill="#ed7d31" />
<rect x="740" y="370.4" width="11" height="10.5" fill="#a5a5a5" />
<rect x="740" y="353.6" width="11" height="16.9" fill="#f5b716" />
<line x1="732.5" y1="427" x2="732.5" y2="430" stroke="#d9d9d9" stroke-width="1" />
<line x1="759.5" y1="427" x2="759.5" y2="430" stroke="#d9d9d9" stroke-width="1" />
</g>
<text transform="translate(349.8,441.5) rotate(-45)" font-size="10.6" fill="#595959" text-anchor="end" textLength="54.7" lengthAdjust="spacingAndGlyphs">01.06.2019</text>
<text transform="translate(378.2,441.5) rotate(-45)" font-size="10.6" fill="#595959" text-anchor="end" textLength="54.7" lengthAdjust="spacingAndGlyphs">02.06.2019</text>
<text transform="translate(406.8,441.5) rotate(-45)" font-size="10.6" fill="#595959" text-anchor="end" textLength="54.7" lengthAdjust="spacingAndGlyphs">03.06.2019</text>
<text transform="translate(435.2,441.5) rotate(-45)" font-size="10.6" fill="#595959" text-anchor="end" textLength="54.7" lengthAdjust="spacingAndGlyphs">04.06.2019</text>
<text transform="translate(463.8,441.5) rotate(-45)" font-size="10.6" fill="#595959" text-anchor="end" textLength="54.7" lengthAdjust="spacingAndGlyphs">05.06.2019</text>
<text transform="translate(492.2,441.5) rotate(-45)" font-size="10.6" fill="#595959" text-anchor="end" textLength="54.7" lengthAdjust="spacingAndGlyphs">06.06.2019</text>
<text transform="translate(520.8,441.5) rotate(-45)" font-size="10.6" fill="#595959" text-anchor="end" textLength="54.7" lengthAdjust="spacingAndGlyphs">07.06.2019</text>
<text transform="translate(549.2,441.5) rotate(-45)" font-size="10.6" fill="#595959" text-anchor="end" textLength="54.7" lengthAdjust="spacingAndGlyphs">08.06.2019</text>
<text transform="translate(577.8,441.5) rotate(-45)" font-size="10.6" fill="#595959" text-anchor="end" textLength="54.7" lengthAdjust="spacingAndGlyphs">09.06.2019</text>
<text transform="translate(606.2,441.5) rotate(-45)" font-size="10.6" fill="#595959" text-anchor="end" textLength="54.7" lengthAdjust="spacingAndGlyphs">10.06.2019</text>
<text transform="translate(634.8,441.5) rotate(-45)" font-size="10.6" fill="#595959" text-anchor="end" textLength="54.7" lengthAdjust="spacingAndGlyphs">11.06.2019</text>
<text transform="translate(663.2,441.5) rotate(-45)" font-size="10.6" fill="#595959" text-anchor="end" textLength="54.7" lengthAdjust="spacingAndGlyphs">12.06.2019</text>
<text transform="translate(691.8,441.5) rotate(-45)" font-size="10.6" fill="#595959" text-anchor="end" textLength="54.7" lengthAdjust="spacingAndGlyphs">13.06.2019</text>
<text transform="translate(720.2,441.5) rotate(-45)" font-size="10.6" fill="#595959" text-anchor="end" textLength="54.7" lengthAdjust="spacingAndGlyphs">14.06.2019</text>
<text transform="translate(748.8,441.5) rotate(-45)" font-size="10.6" fill="#595959" text-anchor="end" textLength="54.7" lengthAdjust="spacingAndGlyphs">15.06.2019</text>
<rect x="431" y="499.5" width="6" height="6.2" fill="#f5b716" />
<text x="440.7" y="506.2" font-size="10.6" fill="#595959" textLength="201.6" lengthAdjust="spacingAndGlyphs" >Продажи по Торговой точке 4, тыс. руб.</text>
<rect x="431" y="522" width="6" height="6.2" fill="#a5a5a5" />
<text x="440.7" y="528.8" font-size="10.6" fill="#595959" textLength="201.6" lengthAdjust="spacingAndGlyphs" >Продажи по Торговой точке 3, тыс. руб.</text>
<rect x="431" y="544.7" width="6" height="6.2" fill="#ed7d31" />
<text x="440.7" y="551.2" font-size="10.6" fill="#595959" textLength="201.6" lengthAdjust="spacingAndGlyphs" >Продажи по Торговой точке 2, тыс. руб.</text>
<rect x="431" y="567.5" width="6" height="6.2" fill="#4472c4" />
<text x="440.7" y="573.6" font-size="10.6" fill="#595959" textLength="201.6" lengthAdjust="spacingAndGlyphs" >Продажи по Торговой точке 1, тыс. руб.</text>
<circle cx="295.5" cy="300.5" r="4.600" fill="#fff" stroke="#8a8a8a" stroke-width="1.600"/>
<circle cx="534.5" cy="300.5" r="4.600" fill="#fff" stroke="#8a8a8a" stroke-width="1.600"/>
<circle cx="774.5" cy="300.5" r="4.600" fill="#fff" stroke="#8a8a8a" stroke-width="1.600"/>
<circle cx="295.5" cy="443.5" r="4.600" fill="#fff" stroke="#8a8a8a" stroke-width="1.600"/>
<circle cx="774.5" cy="443.5" r="4.600" fill="#fff" stroke="#8a8a8a" stroke-width="1.600"/>
<circle cx="295.5" cy="587.5" r="4.600" fill="#fff" stroke="#8a8a8a" stroke-width="1.600"/>
<circle cx="534.5" cy="587.5" r="4.600" fill="#fff" stroke="#8a8a8a" stroke-width="1.600"/>
<circle cx="774.5" cy="587.5" r="4.600" fill="#fff" stroke="#8a8a8a" stroke-width="1.600"/>
<rect x="788.5" y="299.5" width="27" height="27" fill="#fff" stroke="#ababab" shape-rendering="crispEdges"/>
<rect x="788.5" y="337.5" width="27" height="27" fill="#fff" stroke="#ababab" shape-rendering="crispEdges"/>
<rect x="788.5" y="375.5" width="27" height="27" fill="#fff" stroke="#ababab" shape-rendering="crispEdges"/>
<path d="M800 306.500h4v4.500h5.500v4h-5.500v4.500h-4v-4.500h-5v-4h5z" fill="url(#hx)" shape-rendering="crispEdges"/>
<path d="M811 342l-1 4.500-5.500 6-1.800-1.600 5.300-6.400z" fill="#555"/><path d="M802.300 351.300l2 2-1 1.200-2.200-2z" fill="#888"/><path d="M801 352.300l2.300 2.300c-.3 2-2 3.300-4.500 3.600l-5.300.4c2.500-1.500 3.500-3 4.500-4.500.8-1.200 1.700-1.800 3-1.800z" fill="#2f6fd0"/><circle cx="800.500" cy="354.500" r="1.100" fill="#cfe0f7"/>
<path d="M793 381.500h18.500l-7.500 8v7.500h-3.500v-7.500z" fill="#7a7a7a"/><rect x="801.600" y="390" width="1.300" height="6" fill="#fff"/>
</g>
<g id="bottom">
<g shape-rendering="crispEdges">
<rect x="1049" y="222" width="14" height="430" fill="#dadada" />
<rect x="671" y="672" width="360" height="15" fill="#dadada" />
<rect x="1048.5" y="206.5" width="14" height="14" fill="#fff" stroke="#b4b4b4"/>
<rect x="1048.5" y="221.5" width="14" height="408" fill="#fff" stroke="#b4b4b4"/>
<rect x="1048.5" y="651.5" width="14" height="14" fill="#fff" stroke="#b4b4b4"/>
<rect x="656.5" y="672.5" width="14" height="14" fill="#fff" stroke="#b4b4b4"/>
<rect x="670.5" y="672.5" width="319" height="14" fill="#fff" stroke="#b4b4b4"/>
<rect x="1030.5" y="672.5" width="14" height="14" fill="#fff" stroke="#b4b4b4"/>
<rect x="640" y="674" width="2" height="2" fill="#a8a8a8" />
<rect x="640" y="678" width="2" height="2" fill="#a8a8a8" />
<rect x="640" y="682" width="2" height="2" fill="#a8a8a8" />
<rect x="101" y="665" width="107" height="23" fill="#fff" />
<line x1="101" y1="689" x2="208" y2="689" stroke="#217346" stroke-width="2" />
<line x1="101.5" y1="665" x2="101.5" y2="688" stroke="#8c8c8c" stroke-width="1" />
<line x1="207.5" y1="665" x2="207.5" y2="688" stroke="#8c8c8c" stroke-width="1" />
<line x1="1" y1="693.5" x2="1066" y2="693.5" stroke="#d4d4d4" stroke-width="1" />
<rect x="1" y="694" width="1065" height="21" fill="#f3f3f3" />
<rect x="766" y="694" width="38" height="21" fill="#cfcfcf" />
</g>
<path d="M1051.500 215.500l4-4.300 4 4.300z" fill="#606060"/><path d="M1051.500 657l4 4.300 4-4.300z" fill="#606060"/>
<path d="M665.500 675.500l-4.300 4 4.300 4z" fill="#606060"/><path d="M1036 675.500l4.300 4-4.300 4z" fill="#606060"/>
<path d="M32 675.500l-3 3 3 3z" fill="#c0c0c0"/><path d="M57.500 675.500l3 3-3 3z" fill="#c0c0c0"/>
<text x="113.4" y="682.5" font-size="13.5" fill="#1e6b41" textLength="82.6" lengthAdjust="spacingAndGlyphs" font-weight="bold" >microexcel.ru</text>
<circle cx="248.700" cy="678.700" r="7.300" fill="none" stroke="#6a6a6a" stroke-width="1.200"/><path d="M244.700 678.700h8m-4-4v8" stroke="#6a6a6a" stroke-width="1.600"/>
</g>
<g id="statusbar">
<rect x="10.600" y="698.600" width="10.800" height="10.600" fill="#fff"/><path d="M10.600 704.200v5h10.800v-10.500h-5.300" fill="none" stroke="#555" stroke-width="1.200"/><rect x="16" y="698" width="6" height="2.600" fill="#555"/><circle cx="12" cy="700" r="3.600" fill="#f3f3f3"/><circle cx="12" cy="700" r="2.900" fill="#5a5a5a"/><path d="M15.200 703.500h1.800M18.200 703.500h1.800M12.200 705.500h1.800M15.200 705.500h1.800M18.200 705.500h1.800M12.200 707.500h1.800M15.200 707.500h1.800M18.200 707.500h1.800" stroke="#555" stroke-width="1"/>
<text x="425.7" y="707" font-size="12" fill="#444" textLength="113" lengthAdjust="spacingAndGlyphs" >Среднее: 8745,724573</text>
<text x="555" y="707" font-size="12" fill="#444" textLength="79.6" lengthAdjust="spacingAndGlyphs" >Количество: 79</text>
<text x="651.4" y="707" font-size="12" fill="#444" textLength="96" lengthAdjust="spacingAndGlyphs" >Сумма: 655929,343</text>
<g shape-rendering="crispEdges" fill="none" stroke="#555"><rect x="779.500" y="697.500" width="12" height="11"/><path d="M783.500 698v11M787.500 698v11M780 701.500h12M780 705.500h12"/><rect x="816.500" y="698.500" width="13" height="11"/><rect x="819.500" y="700.500" width="7" height="7"/><path d="M821 702.500h4M821 704.500h4"/><rect x="854.500" y="697.500" width="13" height="12"/><path d="M858.500 698v5.500h5V698"/></g>
<g shape-rendering="crispEdges">
<rect x="885" y="703" width="6" height="2" fill="#555" />
<line x1="895" y1="704.5" x2="995" y2="704.5" stroke="#9a9a9a" stroke-width="1" />
<rect x="943" y="698" width="5" height="12" fill="#5a5a5a" />
<rect x="999" y="703" width="7" height="2" fill="#555" />
<rect x="1001.5" y="700.5" width="2" height="7" fill="#555" />
</g>
<text x="1017.5" y="707" font-size="12" fill="#444" textLength="29.3" lengthAdjust="spacingAndGlyphs" >100 %</text>
</g>
<g shape-rendering="crispEdges">
<rect x="0" y="0" width="1" height="716" fill="#217346" />
<rect x="1065.5" y="0" width="1.5" height="716" fill="#217346" shape-rendering="geometricPrecision"/>
<rect x="0" y="715" width="1067" height="1" fill="#217346" />
</g>
</svg></body></html>
